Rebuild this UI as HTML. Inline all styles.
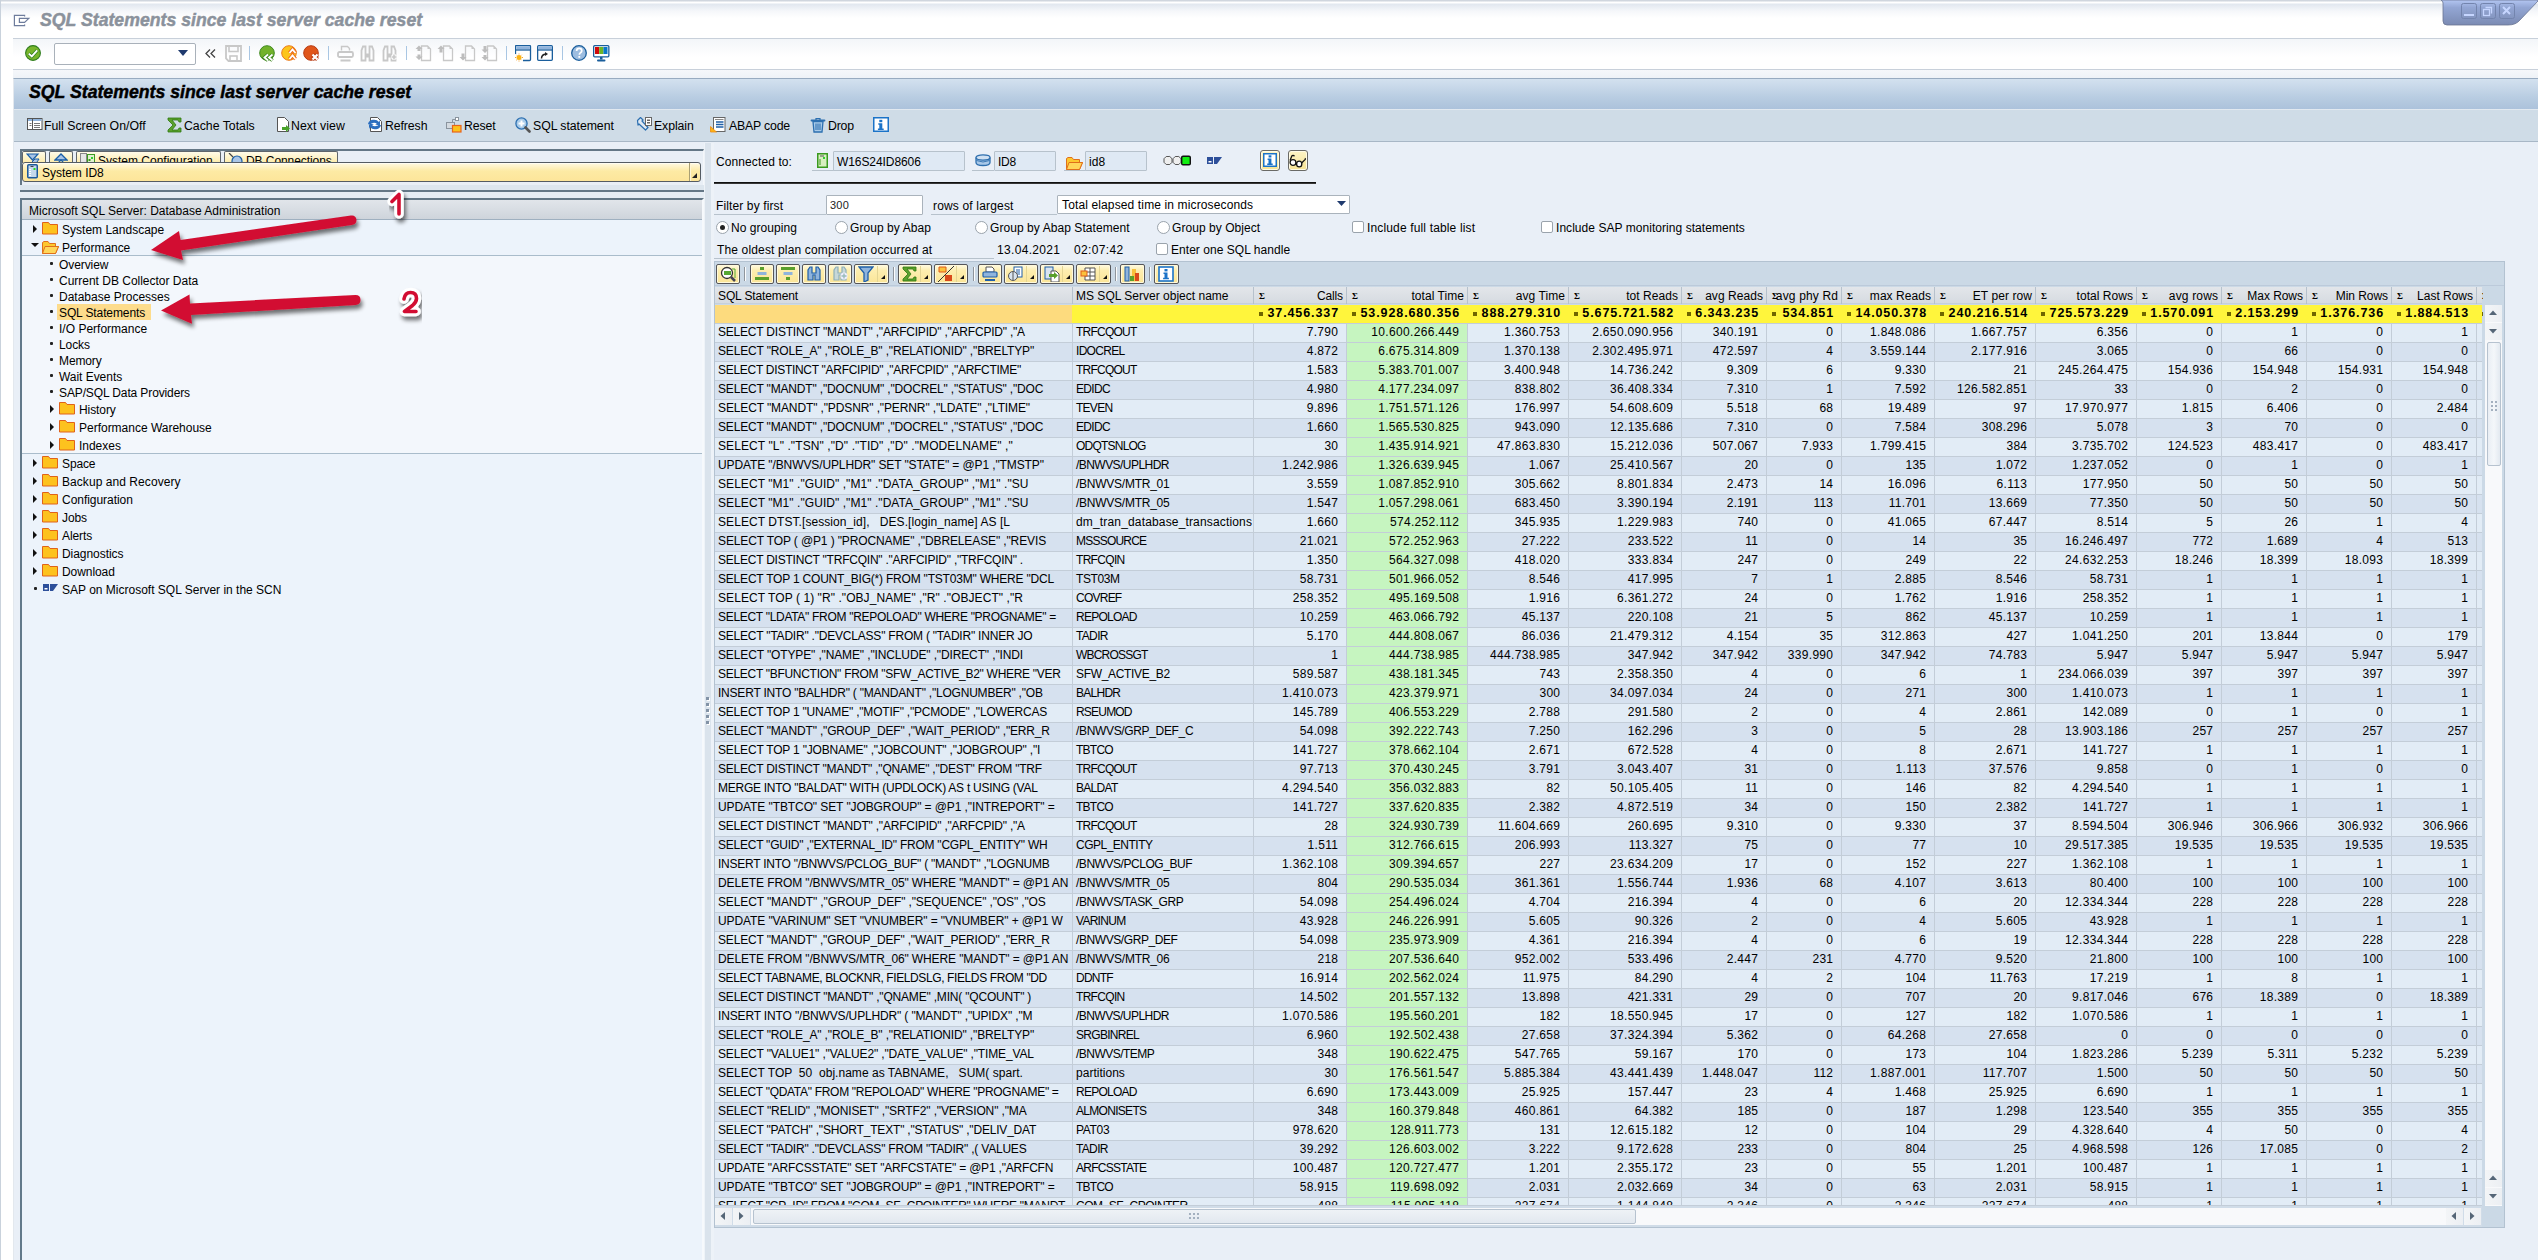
<!DOCTYPE html>
<html><head><meta charset="utf-8">
<style>
*{box-sizing:border-box}
html,body{margin:0;padding:0}
body{width:2538px;height:1260px;position:relative;overflow:hidden;background:#e9eff7;font-family:"Liberation Sans",sans-serif;font-size:12px;color:#000}
.a{position:absolute}
.t{position:absolute;white-space:pre;line-height:16px}
.row{position:absolute;left:715px;height:19px;width:1767px}
.c{position:absolute;top:0;height:18px;line-height:17px;white-space:pre;overflow:hidden;border-right:1px solid #c3cdd8}
.r{text-align:right;padding-right:8px}
.l{padding-left:3px}
.hd .c{border-right:1px solid #b6c1cc;line-height:18px;height:17px}
.tot .c{border-right:none;font-weight:bold;line-height:17px;font-size:12.5px;letter-spacing:0.9px}
.sq{display:inline-block;width:4px;height:4px;background:#6f6500;position:absolute;left:5px;top:7px}
.sig{position:absolute;left:5px;top:5px;font-size:9px;line-height:9px;font-weight:bold;font-family:"Liberation Serif",serif;letter-spacing:0}
</style></head><body>

<div class="a" style="left:0;top:0;width:2538px;height:38px;background:linear-gradient(#d0d6de 0,#d0d6de 1px,#fff 2px,#fff 3px,#e1e7ef 4px,#f5f7fa 11px,#fff 18px)"></div>
<div class="a" style="left:13px;top:38px;width:2525px;height:1px;background:#c8d0da"></div>
<svg class="a" style="left:13px;top:14px" width="18" height="14" viewBox="0 0 18 14"><path d="M11.6 2.6V1.4H1.4V11.6H11.6V10.4" fill="none" stroke="#6e7c9c" stroke-width="1.2"/><path d="M11.6 4.4H6.4V8.4H11.6L15.8 4.4H11.6" fill="none" stroke="#6e7c9c" stroke-width="1.2"/></svg>
<div class="t" style="left:40px;top:10px;font-size:17.7px;line-height:20px;font-weight:bold;font-style:italic;color:#8b929c;-webkit-text-stroke:0.45px #8b929c">SQL Statements since last server cache reset</div>
<svg class="a" style="left:2438px;top:0" width="100" height="30" viewBox="0 0 100 30">
<defs><linearGradient id="wg" x1="0" y1="0" x2="0" y2="1"><stop offset="0" stop-color="#b3c6f2"/><stop offset="0.3" stop-color="#93a6d4"/><stop offset="1" stop-color="#7b8bb3"/></linearGradient></defs>
<path d="M4 0 L100 0 L100 1 L82 20 Q78 25 70 25 L9 25 Q5 25 5 21 L5 3 Q5 1 3 0 Z" fill="url(#wg)" stroke="#6a7592" stroke-width="0.8"/>
<rect x="23.5" y="3.5" width="15" height="15" rx="2" fill="none" stroke="#7384ad"/>
<rect x="42.5" y="3.5" width="15" height="15" rx="2" fill="none" stroke="#7384ad"/>
<rect x="61.5" y="3.5" width="15" height="15" rx="2" fill="none" stroke="#7384ad"/>
<rect x="26" y="14" width="10" height="2" fill="#c6d6ff"/>
<rect x="45.5" y="9.5" width="6" height="6" fill="none" stroke="#c6d6ff" stroke-width="1.3"/>
<path d="M47.5 7.5h6v6" fill="none" stroke="#c6d6ff" stroke-width="1.3"/>
<path d="M65 7l7 7M72 7l-7 7" stroke="#c6d6ff" stroke-width="2"/>
</svg>
<div class="a" style="left:13px;top:39px;width:2525px;height:30px;background:linear-gradient(#f3f6f9,#fff 60%)"></div>
<div class="a" style="left:13px;top:69px;width:2525px;height:1px;background:#c8d0da"></div>
<div class="a" style="left:1px;top:38px;width:12px;height:32px;background:#fff"></div>
<svg class="a" style="left:25px;top:45px" width="17" height="17" viewBox="0 0 17 17"><circle cx="8" cy="8" r="7.4" fill="#78b52c" stroke="#2f7d1f" stroke-width="1.1"/><path d="M3.8 8.6l3 2.8 5.4-6" fill="none" stroke="#2f7d1f" stroke-width="3.4"/><path d="M3.8 8.6l3 2.8 5.4-6" fill="none" stroke="#fff" stroke-width="1.9"/></svg>
<div class="a" style="left:54px;top:43px;width:142px;height:22px;background:#fff;border:1px solid #a9b1ba;border-radius:2px"></div>
<svg class="a" style="left:178px;top:50px" width="10" height="6"><path d="M0 0h10l-5 6z" fill="#1f3a6e"/></svg>
<svg class="a" style="left:205px;top:49px" width="11" height="9"><path d="M5 0.5L1 4.5 5 8.5M10 0.5L6 4.5 10 8.5" fill="none" stroke="#444" stroke-width="1.3"/></svg>
<svg class="a" style="left:225px;top:45px" width="17" height="17" viewBox="0 0 17 17"><path d="M1 1h15v15H3.5L1 13.5z" fill="none" stroke="#c8c8c8" stroke-width="1.8"/><path d="M4 1.5v5h9v-5" fill="none" stroke="#c8c8c8" stroke-width="1.6"/><rect x="5" y="11" width="7" height="5" fill="none" stroke="#c8c8c8" stroke-width="1.6"/></svg>
<div class="a" style="left:249px;top:46px;width:1px;height:14px;background:#a9c6e3"></div>
<svg class="a" style="left:259px;top:45px" width="17" height="17" viewBox="0 0 17 17"><circle cx="8" cy="8" r="7.3" fill="#72b22b" stroke="#3f8a1f" stroke-width="1"/><path d="M9 9.5l-3.5 3 3.5 3M13.5 9.5l-3.5 3 3.5 3" fill="none" stroke="#3f8a1f" stroke-width="3.6" stroke-linejoin="miter"/><path d="M9 9.5l-3.5 3 3.5 3M13.5 9.5l-3.5 3 3.5 3" fill="none" stroke="#fff" stroke-width="1.8"/></svg>
<svg class="a" style="left:281px;top:45px" width="17" height="17" viewBox="0 0 17 17"><circle cx="8" cy="8" r="7.3" fill="#fcc51b" stroke="#ec7a1b" stroke-width="1"/><path d="M8.5 8l3-3.5 3 3.5M8.5 14l3-3.5 3 3.5" fill="none" stroke="#ec6a1b" stroke-width="3.6"/><path d="M8.5 8l3-3.5 3 3.5M8.5 14l3-3.5 3 3.5" fill="none" stroke="#fff" stroke-width="1.8"/></svg>
<svg class="a" style="left:303px;top:45px" width="17" height="17" viewBox="0 0 17 17"><circle cx="8" cy="8" r="7.3" fill="#e0561b" stroke="#b83a12" stroke-width="1"/><path d="M9.5 9.5l5 5M14.5 9.5l-5 5" stroke="#b83a12" stroke-width="4"/><path d="M9.5 9.5l5 5M14.5 9.5l-5 5" stroke="#fff" stroke-width="2.2"/></svg>
<div class="a" style="left:328px;top:46px;width:1px;height:14px;background:#a9c6e3"></div>
<svg class="a" style="left:337px;top:45px" width="17" height="17" viewBox="0 0 17 17"><path d="M4.5 5.5v-4h6l2 2v2" fill="none" stroke="#c8c8c8" stroke-width="1.4"/><rect x="1" y="7" width="15" height="5" rx="1.5" fill="none" stroke="#c8c8c8" stroke-width="1.8"/><rect x="3.5" y="14.5" width="10" height="2" fill="#c8c8c8"/></svg>
<svg class="a" style="left:360px;top:45px" width="17" height="17" viewBox="0 0 17 17"><path d="M1.5 15.5v-10l1.5-4h2.5v8h4v-8H12l1.5 4v10h-4v-4h-4v4z" fill="none" stroke="#c8c8c8" stroke-width="1.8"/></svg>
<svg class="a" style="left:382px;top:45px" width="17" height="17" viewBox="0 0 17 17"><path d="M1.5 15.5v-10l1.5-4h2.5v8h4v-8H12l1.5 4v10h-4v-4h-4v4z" fill="none" stroke="#c8c8c8" stroke-width="1.8"/><path d="M12 9v6M9 12h6" stroke="#fff" stroke-width="3"/><path d="M12 9.5v5M9.5 12h5" stroke="#c8c8c8" stroke-width="1.6"/></svg>
<div class="a" style="left:406px;top:46px;width:1px;height:14px;background:#a9c6e3"></div>
<svg class="a" style="left:415px;top:45px" width="17" height="17" viewBox="0 0 17 17"><path d="M6.5 1h6l3 3v11.5h-9z" fill="none" stroke="#c8c8c8" stroke-width="1.3"/><path d="M12.5 1v3h3" fill="#c8c8c8"/><path d="M4 0.5l-3.5 3.5h2v2h3v-2h2zM4 15l-3.5-3.5h2v-2h3v2h2z" fill="#bdbdbd"/></svg>
<svg class="a" style="left:437px;top:45px" width="17" height="17" viewBox="0 0 17 17"><path d="M6.5 1h6l3 3v11.5h-9z" fill="none" stroke="#c8c8c8" stroke-width="1.3"/><path d="M12.5 1v3h3" fill="#c8c8c8"/><path d="M4 0.5l-3.5 3.5h2v3.5h3v-3.5h2z" fill="#bdbdbd"/></svg>
<svg class="a" style="left:459px;top:45px" width="17" height="17" viewBox="0 0 17 17"><path d="M6.5 1h6l3 3v11.5h-9z" fill="none" stroke="#c8c8c8" stroke-width="1.3"/><path d="M12.5 1v3h3" fill="#c8c8c8"/><path d="M4 15.5l-3.5-3.5h2v-3.5h3v3.5h2z" fill="#bdbdbd"/></svg>
<svg class="a" style="left:481px;top:45px" width="17" height="17" viewBox="0 0 17 17"><path d="M6.5 1h6l3 3v11.5h-9z" fill="none" stroke="#c8c8c8" stroke-width="1.3"/><path d="M12.5 1v3h3" fill="#c8c8c8"/><path d="M4 8l-3.5-3.5h2v-3.5h3v3.5h2zM4 15.5l-3.5-3.5h2v-2h3v2h2z" fill="#bdbdbd"/></svg>
<div class="a" style="left:506px;top:46px;width:1px;height:14px;background:#a9c6e3"></div>
<svg class="a" style="left:515px;top:45px" width="17" height="17" viewBox="0 0 17 17"><path d="M8 15.5h6.5q1 0 1-1v-13q0-1-1-1h-13q-1 0-1 1V9" fill="#fff" stroke="#1a5e9c" stroke-width="1.3"/><rect x="1.3" y="1.3" width="13.6" height="3" fill="#8fb3dc"/><path d="M1 5h15" stroke="#1a5e9c" stroke-width="1.3"/><circle cx="4" cy="12.5" r="2.5" fill="#fcb414"/><path d="M4 8.5v1M4 15.5v1M0 12.5h1M7 12.5h1M1.3 9.8l.7.7M6 14.5l.7.7M1.3 15.2l.7-.7M6 10.5l.7-.7" stroke="#f69b14" stroke-width="0.9"/></svg>
<svg class="a" style="left:537px;top:45px" width="17" height="17" viewBox="0 0 17 17"><rect x="0.65" y="0.65" width="14.7" height="14.7" rx="1" fill="#fff" stroke="#1a5e9c" stroke-width="1.3"/><rect x="1.3" y="1.3" width="13.6" height="3" fill="#8fb3dc"/><path d="M1 5h15" stroke="#1a5e9c" stroke-width="1.3"/><path d="M4.5 13.5q0-4 4.5-4.5" fill="none" stroke="#222" stroke-width="1.5"/><path d="M8 7l3 2-3 2z" fill="#222"/></svg>
<div class="a" style="left:562px;top:46px;width:1px;height:14px;background:#a9c6e3"></div>
<svg class="a" style="left:571px;top:45px" width="17" height="17" viewBox="0 0 17 17"><circle cx="8" cy="8" r="7.3" fill="#9dbde0" stroke="#1a5e9c" stroke-width="1.3"/><path d="M5.6 6q0-2.6 2.6-2.6 2.6 0 2.6 2.4 0 1.5-1.6 2.3-.8.4-.8 1.6" fill="none" stroke="#fff" stroke-width="1.7"/><rect x="7.4" y="11" width="1.8" height="1.8" fill="#fff"/></svg>
<svg class="a" style="left:593px;top:45px" width="17" height="17" viewBox="0 0 17 17"><rect x="0.65" y="0.65" width="15.2" height="11.2" rx="1" fill="#fff" stroke="#1a5e9c" stroke-width="1.3"/><rect x="2" y="2" width="4.2" height="7" fill="#d10a0a"/><rect x="6.2" y="2" width="4.2" height="7" fill="#6db526"/><rect x="10.4" y="2" width="4.1" height="7" fill="#0a78c8"/><rect x="7" y="12" width="2.5" height="2.5" fill="#1a5e9c"/><rect x="4" y="14.5" width="8.5" height="2" rx="1" fill="#1a5e9c"/></svg>
<div class="a" style="left:0;top:0px;width:1px;height:1260px;background:#c9d2dc"></div>
<div class="a" style="left:1px;top:70px;width:12px;height:1190px;background:#fff"></div>
<div class="a" style="left:13px;top:70px;width:2525px;height:8px;background:linear-gradient(#f5f7fa,#eef2f7)"></div>
<div class="a" style="left:13px;top:78px;width:2525px;height:1182px;background:#e9eff7;border-left:1px solid #e3e8ee;border-top:1px solid #98abc0"></div>
<div class="a" style="left:14px;top:79px;width:2524px;height:30px;background:linear-gradient(#d3e1ef,#b9cde2 60%,#acc2db)"></div>
<div class="t" style="left:29px;top:82px;font-size:17.7px;line-height:20px;font-weight:bold;font-style:italic;color:#000;-webkit-text-stroke:0.45px #000">SQL Statements since last server cache reset</div>
<div class="a" style="left:14px;top:109px;width:2524px;height:33px;background:#cfdce7;border-top:1px solid #e2e9f0;border-bottom:1px solid #a8b7c6"></div>
<svg class="a" style="left:27px;top:117px" width="16" height="16" viewBox="0 0 16 16"><rect x="0.5" y="1.5" width="14.5" height="11" fill="#fff" stroke="#555"/><rect x="1" y="2" width="13.5" height="2" fill="#8fb3dc"/><path d="M5.5 2v10" stroke="#555"/><path d="M2.5 6.5h2M2.5 8.5h2" stroke="#777"/><path d="M7 6.5h6M7 8.5h6M7 10.5h6" stroke="#777"/></svg>
<div class="t" style="left:44px;top:118px;font-size:12.3px;letter-spacing:0.00px">Full Screen On/Off</div>
<svg class="a" style="left:167px;top:117px" width="16" height="16" viewBox="0 0 16 16"><path d="M1 1h13v4h-2l-1-2H5l4 5-4 5h6l1-2h2v4H1v-2l5-5-5-5z" fill="#5aa02c" stroke="#2f7a12" stroke-width="0.8"/></svg>
<div class="t" style="left:184px;top:118px;font-size:12.3px;letter-spacing:-0.01px">Cache Totals</div>
<svg class="a" style="left:276px;top:117px" width="16" height="16" viewBox="0 0 16 16"><path d="M1.5 0.5h7l4 4v10h-11z" fill="#fff" stroke="#555"/><path d="M6 10h4v-2l4 3.5-4 3.5v-2H6z" fill="#49a32a"/></svg>
<div class="t" style="left:291px;top:118px;font-size:12.3px;letter-spacing:0.06px">Next view</div>
<svg class="a" style="left:367px;top:117px" width="16" height="16" viewBox="0 0 16 16"><path d="M3.5 0.5h7l4 4v10h-11z" fill="#fff" stroke="#555"/><path d="M1 7a6 5 0 0 1 11-2l1-2v5h-5l2-1a4 3 0 0 0-7 1z M14 8a6 5 0 0 1-11 2l-1 2V7h5l-2 1a4 3 0 0 0 7-1z" fill="#2c6fc0"/></svg>
<div class="t" style="left:385px;top:118px;font-size:12.3px;letter-spacing:-0.09px">Refresh</div>
<svg class="a" style="left:446px;top:117px" width="16" height="16" viewBox="0 0 16 16"><rect x="0.5" y="5.5" width="8" height="6" fill="#d4dae0" stroke="#8a949e"/><path d="M6.5 5.5v-3h3" fill="none" stroke="#8a949e"/><rect x="9.5" y="0.5" width="3" height="3" fill="#fff" stroke="#8a949e"/><rect x="6.5" y="8.5" width="8.5" height="6.5" fill="#fcc21b" stroke="#e8641b" stroke-width="1.2"/></svg>
<div class="t" style="left:464px;top:118px;font-size:12.3px;letter-spacing:-0.14px">Reset</div>
<svg class="a" style="left:515px;top:117px" width="16" height="16" viewBox="0 0 16 16"><circle cx="6.5" cy="6.5" r="5.6" fill="#a9cbe9" stroke="#2c6fb0" stroke-width="1.3"/><path d="M6.5 3.5v6M3.5 6.5h6" stroke="#fff" stroke-width="2"/><path d="M10.5 10.5l4 4" stroke="#555" stroke-width="2.6" stroke-linecap="round"/></svg>
<div class="t" style="left:533px;top:118px;font-size:12.3px;letter-spacing:-0.06px">SQL statement</div>
<svg class="a" style="left:636px;top:117px" width="16" height="16" viewBox="0 0 16 16"><path d="M1.5 3.5l3-3 2.5 2.5-1 1 6 6.5-2.5 2.5-6.5-6-1 1z" fill="#dfe9f3" stroke="#2c6fb0" stroke-width="1.2" stroke-linejoin="round"/><rect x="9.5" y="0.5" width="6" height="8" fill="#fff" stroke="#666"/><rect x="11" y="2.5" width="3" height="1.5" fill="#666"/><rect x="11" y="5" width="3" height="1.5" fill="#666"/></svg>
<div class="t" style="left:654px;top:118px;font-size:12.3px;letter-spacing:-0.08px">Explain</div>
<svg class="a" style="left:710px;top:117px" width="16" height="16" viewBox="0 0 16 16"><rect x="3.5" y="0.5" width="11.5" height="14" fill="#fff" stroke="#666"/><path d="M5 2.5h8.5" stroke="#888"/><path d="M6 5h7.5M6 7.5h7.5M6 10h7.5" stroke="#1f5fa8" stroke-width="1.3"/><path d="M0.5 15V9.5l6 5.5z" fill="#fcb414" stroke="#f08a14" stroke-width="0.8"/></svg>
<div class="t" style="left:729px;top:118px;font-size:12.3px;letter-spacing:-0.19px">ABAP code</div>
<svg class="a" style="left:810px;top:117px" width="16" height="16" viewBox="0 0 16 16"><path d="M1.5 3.5h13" stroke="#2c6fb0" stroke-width="1.8" stroke-linecap="round"/><path d="M6 3V1.5h4V3" fill="none" stroke="#2c6fb0" stroke-width="1.2"/><path d="M3 4.5h10l-1 10.5H4z" fill="#a9cbe9" stroke="#2c6fb0" stroke-width="1.3"/><path d="M6 6.5v6.5M8 6.5v6.5M10 6.5v6.5" stroke="#2c6fb0" stroke-width="1.1"/></svg>
<div class="t" style="left:828px;top:118px;font-size:12.3px;letter-spacing:-0.18px">Drop</div>
<svg class="a" style="left:873px;top:117px" width="16" height="15"><rect x="0.75" y="0.75" width="14.5" height="13.5" fill="#fff" stroke="#1b73c8" stroke-width="1.5"/><rect x="6.3" y="2.8" width="3" height="2.4" fill="#1b73c8"/><path d="M5.3 6.2h4v5.3h1.4v1.6H4.9v-1.6h1.4V7.8h-1z" fill="#1b73c8"/></svg>
<div class="a" style="left:20px;top:149px;width:684px;height:36px;background:#e9eff6;border-left:2px solid #647786;border-top:2px solid #647786;border-right:1px solid #f4f7fa"></div>
<div class="a" style="left:20px;top:185px;width:684px;height:5px;background:#dde6ee"></div>
<div class="a" style="left:22px;top:151px;width:24px;height:12px;overflow:hidden;background:linear-gradient(#fffbe9,#fdeba8);border:1px solid #5f656b;border-bottom:none;border-radius:2px 2px 0 0">
</div>
<div class="a" style="left:49px;top:151px;width:24px;height:12px;overflow:hidden;background:linear-gradient(#fffbe9,#fdeba8);border:1px solid #5f656b;border-bottom:none;border-radius:2px 2px 0 0">
</div>
<div class="a" style="left:76px;top:151px;width:145px;height:12px;overflow:hidden;background:linear-gradient(#fffbe9,#fdeba8);border:1px solid #5f656b;border-bottom:none;border-radius:2px 2px 0 0">
<div class="t" style="left:21px;top:1px;letter-spacing:0.00px">System Configuration</div>
</div>
<div class="a" style="left:224px;top:151px;width:114px;height:12px;overflow:hidden;background:linear-gradient(#fffbe9,#fdeba8);border:1px solid #5f656b;border-bottom:none;border-radius:2px 2px 0 0">
<div class="t" style="left:21px;top:1px;letter-spacing:-0.07px">DB Connections</div>
</div>
<svg class="a" style="left:26px;top:153px" width="14" height="9"><path d="M1 1h11l-5.5 6z" fill="#a9c5e6" stroke="#1a5ea8" stroke-width="1.2"/><path d="M6 9l3-3h4l-2 3" fill="#a9c5e6" stroke="#1a5ea8" stroke-width="1"/></svg>
<svg class="a" style="left:54px;top:153px" width="14" height="9"><path d="M1 7l6-6 6 6z" fill="#a9c5e6" stroke="#1a5ea8" stroke-width="1.3"/><path d="M4 10l3-3 3 3" fill="none" stroke="#1a5ea8" stroke-width="1.2"/></svg>
<svg class="a" style="left:80px;top:153px" width="16" height="9"><rect x="0.5" y="0.5" width="6" height="11" fill="#e6e6e6" stroke="#888"/><rect x="7.5" y="1.5" width="7" height="10" fill="#dff0cf" stroke="#3c9a20"/><rect x="11" y="4" width="2" height="2" fill="#2fd12f"/><rect x="8.5" y="6" width="2" height="2" fill="#3c9a20"/></svg>
<svg class="a" style="left:228px;top:153px" width="16" height="9"><path d="M1 0l4 4" stroke="#444" stroke-width="1.2"/><circle cx="9" cy="8" r="5" fill="#a9c5e6" stroke="#1a5ea8" stroke-width="1.2"/></svg>
<div class="a" style="left:22px;top:162px;width:679px;height:20px;background:linear-gradient(#fffae4,#fdeaa4 45%,#fde59a);border:1px solid #555c63;border-radius:3px;box-shadow:inset 0 1px 0 #fffdf2"></div>
<svg class="a" style="left:27px;top:164px" width="11" height="15"><rect x="0.75" y="0.75" width="9.5" height="13" rx="1" fill="#c5d9ec" stroke="#1c5a9c" stroke-width="1.5"/><path d="M3.5 2.5h3" stroke="#444"/><rect x="6.5" y="4" width="2" height="2" fill="#22dd22"/><path d="M2 5.5h2M2 7.5h2M2 9.5h2M2 11.5h2" stroke="#fff" stroke-width="1.1"/></svg>
<div class="t" style="left:42px;top:165px;letter-spacing:-0.03px">System ID8</div>
<div class="a" style="left:689px;top:163px;width:1px;height:18px;background:#a99f73;box-shadow:1px 0 0 #fff6d6"></div>
<svg class="a" style="left:692px;top:173px" width="6" height="6"><path d="M5 0v5H0z" fill="#222"/></svg>
<div class="a" style="left:20px;top:190px;width:684px;height:2px;background:#647786"></div>
<div class="a" style="left:20px;top:192px;width:684px;height:6px;background:#e6edf4"></div>
<div class="a tree" style="left:20px;top:198px;width:684px;height:1062px;background:#ecf3fb;border-left:2px solid #62798a;border-top:2px solid #637786;border-right:2px solid #f6f9fc"></div>
<div class="a" style="left:22px;top:200px;width:680px;height:20px;background:linear-gradient(#e1e5ea,#d8dde3 50%,#ced4db);border-bottom:1px solid #9fb0c0"></div>
<div class="t" style="left:29px;top:203px;letter-spacing:0.01px">Microsoft SQL Server: Database Administration</div>
<div class="a" style="left:22px;top:255px;width:680px;height:199px;background:#f3f7fc;border-top:1px solid #a9bccb;border-bottom:1px solid #a9bccb"></div>
<svg class="a" style="left:33px;top:225px" width="5" height="8"><path d="M0 0l4 4-4 4z" fill="#111"/></svg>
<svg class="a" style="left:42px;top:222px" width="17" height="14"><path d="M0.5 0.5h6l1.5 2h7.5v9.5H0.5z" fill="#fdc21e" stroke="#e0621b"/></svg>
<div class="t" style="left:62px;top:222px;letter-spacing:0.01px">System Landscape</div>
<svg class="a" style="left:31px;top:243px" width="8" height="5"><path d="M0 0h8l-4 4z" fill="#111"/></svg>
<svg class="a" style="left:42px;top:240px" width="17" height="14"><path d="M0.5 2.5v11h13l3-7h-3v-3h-6l-1.5-2h-4z" fill="#fdc82f" stroke="#e0701b"/><path d="M3 6.5h13.5l-3 7H0.5z" fill="#ffd75a" stroke="#e0701b"/></svg>
<div class="t" style="left:62px;top:240px;letter-spacing:-0.04px">Performance</div>
<div class="a" style="left:50px;top:262px;width:3px;height:3px;background:#222;border-radius:1px"></div>
<div class="t" style="left:59px;top:257px;letter-spacing:-0.08px">Overview</div>
<div class="a" style="left:50px;top:278px;width:3px;height:3px;background:#222;border-radius:1px"></div>
<div class="t" style="left:59px;top:273px;letter-spacing:-0.01px">Current DB Collector Data</div>
<div class="a" style="left:50px;top:294px;width:3px;height:3px;background:#222;border-radius:1px"></div>
<div class="t" style="left:59px;top:289px;letter-spacing:0.00px">Database Processes</div>
<div class="a" style="left:50px;top:310px;width:3px;height:3px;background:#222;border-radius:1px"></div>
<div class="a" style="left:57px;top:304px;width:94px;height:16px;background:#fddc8c"></div>
<div class="t" style="left:59px;top:305px;letter-spacing:-0.11px">SQL Statements</div>
<div class="a" style="left:50px;top:326px;width:3px;height:3px;background:#222;border-radius:1px"></div>
<div class="t" style="left:59px;top:321px;letter-spacing:0.01px">I/O Performance</div>
<div class="a" style="left:50px;top:342px;width:3px;height:3px;background:#222;border-radius:1px"></div>
<div class="t" style="left:59px;top:337px;letter-spacing:-0.10px">Locks</div>
<div class="a" style="left:50px;top:358px;width:3px;height:3px;background:#222;border-radius:1px"></div>
<div class="t" style="left:59px;top:353px;letter-spacing:-0.12px">Memory</div>
<div class="a" style="left:50px;top:374px;width:3px;height:3px;background:#222;border-radius:1px"></div>
<div class="t" style="left:59px;top:369px;letter-spacing:-0.04px">Wait Events</div>
<div class="a" style="left:50px;top:390px;width:3px;height:3px;background:#222;border-radius:1px"></div>
<div class="t" style="left:59px;top:385px;letter-spacing:-0.12px">SAP/SQL Data Providers</div>
<svg class="a" style="left:50px;top:405px" width="5" height="8"><path d="M0 0l4 4-4 4z" fill="#111"/></svg>
<svg class="a" style="left:59px;top:402px" width="17" height="14"><path d="M0.5 0.5h6l1.5 2h7.5v9.5H0.5z" fill="#fdc21e" stroke="#e0621b"/></svg>
<div class="t" style="left:79px;top:402px;letter-spacing:-0.09px">History</div>
<svg class="a" style="left:50px;top:423px" width="5" height="8"><path d="M0 0l4 4-4 4z" fill="#111"/></svg>
<svg class="a" style="left:59px;top:420px" width="17" height="14"><path d="M0.5 0.5h6l1.5 2h7.5v9.5H0.5z" fill="#fdc21e" stroke="#e0621b"/></svg>
<div class="t" style="left:79px;top:420px;letter-spacing:-0.01px">Performance Warehouse</div>
<svg class="a" style="left:50px;top:441px" width="5" height="8"><path d="M0 0l4 4-4 4z" fill="#111"/></svg>
<svg class="a" style="left:59px;top:438px" width="17" height="14"><path d="M0.5 0.5h6l1.5 2h7.5v9.5H0.5z" fill="#fdc21e" stroke="#e0621b"/></svg>
<div class="t" style="left:79px;top:438px;letter-spacing:-0.02px">Indexes</div>
<svg class="a" style="left:33px;top:459px" width="5" height="8"><path d="M0 0l4 4-4 4z" fill="#111"/></svg>
<svg class="a" style="left:42px;top:456px" width="17" height="14"><path d="M0.5 0.5h6l1.5 2h7.5v9.5H0.5z" fill="#fdc21e" stroke="#e0621b"/></svg>
<div class="t" style="left:62px;top:456px;letter-spacing:-0.12px">Space</div>
<svg class="a" style="left:33px;top:477px" width="5" height="8"><path d="M0 0l4 4-4 4z" fill="#111"/></svg>
<svg class="a" style="left:42px;top:474px" width="17" height="14"><path d="M0.5 0.5h6l1.5 2h7.5v9.5H0.5z" fill="#fdc21e" stroke="#e0621b"/></svg>
<div class="t" style="left:62px;top:474px;letter-spacing:0.06px">Backup and Recovery</div>
<svg class="a" style="left:33px;top:495px" width="5" height="8"><path d="M0 0l4 4-4 4z" fill="#111"/></svg>
<svg class="a" style="left:42px;top:492px" width="17" height="14"><path d="M0.5 0.5h6l1.5 2h7.5v9.5H0.5z" fill="#fdc21e" stroke="#e0621b"/></svg>
<div class="t" style="left:62px;top:492px;letter-spacing:-0.04px">Configuration</div>
<svg class="a" style="left:33px;top:513px" width="5" height="8"><path d="M0 0l4 4-4 4z" fill="#111"/></svg>
<svg class="a" style="left:42px;top:510px" width="17" height="14"><path d="M0.5 0.5h6l1.5 2h7.5v9.5H0.5z" fill="#fdc21e" stroke="#e0621b"/></svg>
<div class="t" style="left:62px;top:510px;letter-spacing:-0.11px">Jobs</div>
<svg class="a" style="left:33px;top:531px" width="5" height="8"><path d="M0 0l4 4-4 4z" fill="#111"/></svg>
<svg class="a" style="left:42px;top:528px" width="17" height="14"><path d="M0.5 0.5h6l1.5 2h7.5v9.5H0.5z" fill="#fdc21e" stroke="#e0621b"/></svg>
<div class="t" style="left:62px;top:528px;letter-spacing:-0.10px">Alerts</div>
<svg class="a" style="left:33px;top:549px" width="5" height="8"><path d="M0 0l4 4-4 4z" fill="#111"/></svg>
<svg class="a" style="left:42px;top:546px" width="17" height="14"><path d="M0.5 0.5h6l1.5 2h7.5v9.5H0.5z" fill="#fdc21e" stroke="#e0621b"/></svg>
<div class="t" style="left:62px;top:546px;letter-spacing:-0.05px">Diagnostics</div>
<svg class="a" style="left:33px;top:567px" width="5" height="8"><path d="M0 0l4 4-4 4z" fill="#111"/></svg>
<svg class="a" style="left:42px;top:564px" width="17" height="14"><path d="M0.5 0.5h6l1.5 2h7.5v9.5H0.5z" fill="#fdc21e" stroke="#e0621b"/></svg>
<div class="t" style="left:62px;top:564px;letter-spacing:-0.07px">Download</div>
<div class="a" style="left:34px;top:587px;width:3px;height:3px;background:#222;border-radius:1px"></div>
<svg class="a" style="left:42px;top:583px" width="16" height="9"><rect x="1" y="1" width="6" height="7" fill="#2d4f9a"/><rect x="2.5" y="5" width="3" height="1.5" fill="#fff"/><path d="M8 1h8l-5 7H8z" fill="#2d4f9a"/></svg>
<div class="t" style="left:62px;top:582px;letter-spacing:-0.00px">SAP on Microsoft SQL Server in the SCN</div>
<div class="a" style="left:704px;top:143px;width:1px;height:1117px;background:#eef3f8"></div>
<div class="a" style="left:705px;top:143px;width:6px;height:1117px;background:#dae3ec"></div>
<div class="a" style="left:711px;top:143px;width:3px;height:1117px;background:#edf2f8"></div>
<div class="a" style="left:706px;top:697px;width:3px;height:3px;background:#8393a6;box-shadow:1px 1px 0 #fff"></div>
<div class="a" style="left:706px;top:703px;width:3px;height:3px;background:#8393a6;box-shadow:1px 1px 0 #fff"></div>
<div class="a" style="left:706px;top:709px;width:3px;height:3px;background:#8393a6;box-shadow:1px 1px 0 #fff"></div>
<div class="a" style="left:706px;top:715px;width:3px;height:3px;background:#8393a6;box-shadow:1px 1px 0 #fff"></div>
<div class="a" style="left:706px;top:721px;width:3px;height:3px;background:#8393a6;box-shadow:1px 1px 0 #fff"></div>
<div class="t" style="left:716px;top:154px;letter-spacing:0.10px">Connected to:</div>
<div class="a" style="left:812px;top:170px;width:22px;height:1px;background:#b7c2cc"></div>
<svg class="a" style="left:817px;top:153px" width="11" height="15"><rect x="0.75" y="0.75" width="9.5" height="13.5" fill="#d8efc0" stroke="#3a9a1f" stroke-width="1.5"/><path d="M3 3h4" stroke="#555"/><rect x="6" y="4" width="2" height="2" fill="#2fd12f"/><path d="M2 7h2M2 9h2M2 11h2" stroke="#3a9a1f"/></svg>
<div class="a" style="left:833px;top:151px;width:132px;height:20px;background:#dfe9f4;border:1px solid #b7c2cc;border-radius:1px"></div>
<div class="t" style="left:837px;top:154px;font-size:12px;letter-spacing:-0.08px">W16S24ID8606</div>
<div class="a" style="left:972px;top:170px;width:22px;height:1px;background:#b7c2cc"></div>
<svg class="a" style="left:975px;top:154px" width="16" height="13" viewBox="0 0 16 13"><path d="M1 3.5v5q0 3 7 3t7-3v-5" fill="#a9c8e8" stroke="#2f6fae" stroke-width="1.3"/><ellipse cx="8" cy="3.5" rx="7" ry="2.6" fill="#cfe0f2" stroke="#2f6fae" stroke-width="1.3"/><path d="M1.5 6.5q6.5 3 13 0" fill="none" stroke="#2f6fae" stroke-width="0.9"/></svg>
<div class="a" style="left:994px;top:151px;width:62px;height:20px;background:#dfe9f4;border:1px solid #b7c2cc;border-radius:1px"></div>
<div class="t" style="left:998px;top:154px;font-size:12px;letter-spacing:-0.28px">ID8</div>
<div class="a" style="left:1064px;top:170px;width:22px;height:1px;background:#b7c2cc"></div>
<svg class="a" style="left:1066px;top:156px" width="17" height="14"><path d="M0.5 2.5v11h13l3-7h-3v-3h-6l-1.5-2h-4z" fill="#fdc82f" stroke="#e0701b"/><path d="M3 6.5h13.5l-3 7H0.5z" fill="#ffd75a" stroke="#e0701b"/></svg>
<div class="a" style="left:1085px;top:151px;width:62px;height:20px;background:#dfe9f4;border:1px solid #b7c2cc;border-radius:1px"></div>
<div class="t" style="left:1089px;top:154px;font-size:12px;letter-spacing:0.10px">id8</div>
<svg class="a" style="left:1163px;top:155px" width="30" height="12" viewBox="0 0 30 12"><path d="M3.2 1.5h3.6l2.2 2.2v3.6L6.8 9.5H3.2L1 7.3V3.7z" fill="#eee" stroke="#555" stroke-width="1"/><path d="M12.2 1.5h3.6l2.2 2.2v3.6l-2.2 2.2h-3.6L10 7.3V3.7z" fill="#eee" stroke="#555" stroke-width="1"/><rect x="18.7" y="1.2" width="8.6" height="8.6" rx="1.3" fill="#11ee11" stroke="#111" stroke-width="1.4"/></svg>
<svg class="a" style="left:1206px;top:156px" width="16" height="9"><rect x="1" y="1" width="6" height="7" fill="#2d4f9a"/><rect x="2.5" y="5" width="3" height="1.5" fill="#fff"/><path d="M8 1h8l-5 7H8z" fill="#2d4f9a"/></svg>
<div class="a" style="left:1260px;top:150px;width:20px;height:21px;background:linear-gradient(#fdf4c6,#f6e394);border:1px solid #6a6a66;border-radius:3px;box-shadow:inset 0 0 0 1px #fffbe6"></div>
<svg class="a" style="left:1263px;top:153px" width="14" height="14"><rect x="0.75" y="0.75" width="12.5" height="12.5" fill="#fff" stroke="#1b73c8" stroke-width="1.5"/><rect x="5.6" y="2.3" width="2.8" height="2.2" fill="#1b73c8"/><path d="M4.6 5.4h3.8v5h1.3v1.5H4.2v-1.5h1.3V6.9h-.9z" fill="#1b73c8"/></svg>
<div class="a" style="left:1288px;top:150px;width:20px;height:21px;background:linear-gradient(#fdf4c6,#f6e394);border:1px solid #6a6a66;border-radius:3px;box-shadow:inset 0 0 0 1px #fffbe6"></div>
<svg class="a" style="left:1289px;top:154px" width="18" height="14" viewBox="0 0 18 14"><path d="M5.5 2.2Q4 0.5 2.8 2L1 6.5" fill="none" stroke="#111" stroke-width="1.3"/><ellipse cx="4" cy="8.5" rx="2.9" ry="2.9" fill="#fff" stroke="#111" stroke-width="1.3"/><ellipse cx="10.2" cy="10" rx="2.6" ry="2.9" fill="#fff" stroke="#111" stroke-width="1.3"/><path d="M6.6 8.7L7.6 9.3M12.6 9L16 5.6Q16.8 4.6 15.8 4.3" fill="none" stroke="#111" stroke-width="1.3"/></svg>
<div class="a" style="left:714px;top:182px;width:602px;height:2px;background:linear-gradient(#111 60%,#777)"></div>
<div class="t" style="left:716px;top:198px;letter-spacing:0.12px">Filter by first</div>
<div class="a" style="left:714px;top:214px;width:112px;height:1px;background:#b7c2cc"></div>
<div class="a" style="left:826px;top:195px;width:97px;height:20px;background:#fff;border:1px solid #aab3bc;border-radius:1px"></div>
<div class="t" style="left:830px;top:197px;font-size:11px;color:#222;letter-spacing:0.22px">300</div>
<div class="t" style="left:933px;top:198px;letter-spacing:0.17px">rows of largest</div>
<div class="a" style="left:931px;top:214px;width:126px;height:1px;background:#b7c2cc"></div>
<div class="a" style="left:1057px;top:195px;width:293px;height:19px;background:#fff;border:1px solid #aab3bc;border-radius:1px"></div>
<div class="t" style="left:1062px;top:197px;letter-spacing:0.13px">Total elapsed time in microseconds</div>
<svg class="a" style="left:1337px;top:201px" width="10" height="6"><path d="M0 0h9l-4.5 5z" fill="#1f3a6e"/></svg>
<div class="a" style="left:716px;top:221px;width:13px;height:13px;border-radius:50%;background:#fff;border:1px solid #9aa3ac"></div><div class="a" style="left:720px;top:225px;width:5px;height:5px;border-radius:50%;background:#222"></div>
<div class="t" style="left:731px;top:220px;letter-spacing:0.05px">No grouping</div>
<div class="a" style="left:835px;top:221px;width:13px;height:13px;border-radius:50%;background:#fff;border:1px solid #9aa3ac"></div>
<div class="t" style="left:850px;top:220px;letter-spacing:0.07px">Group by Abap</div>
<div class="a" style="left:975px;top:221px;width:13px;height:13px;border-radius:50%;background:#fff;border:1px solid #9aa3ac"></div>
<div class="t" style="left:990px;top:220px;letter-spacing:0.07px">Group by Abap Statement</div>
<div class="a" style="left:1157px;top:221px;width:13px;height:13px;border-radius:50%;background:#fff;border:1px solid #9aa3ac"></div>
<div class="t" style="left:1172px;top:220px;letter-spacing:0.05px">Group by Object</div>
<div class="a" style="left:1352px;top:221px;width:12px;height:12px;background:#fff;border:1px solid #9aa3ac;border-radius:2px"></div>
<div class="t" style="left:1367px;top:220px;letter-spacing:0.15px">Include full table list</div>
<div class="a" style="left:1541px;top:221px;width:12px;height:12px;background:#fff;border:1px solid #9aa3ac;border-radius:2px"></div>
<div class="t" style="left:1556px;top:220px;letter-spacing:0.05px">Include SAP monitoring statements</div>
<div class="t" style="left:717px;top:242px;letter-spacing:0.15px">The oldest plan compilation occurred at</div>
<div class="a" style="left:714px;top:258px;width:280px;height:1px;background:#b7c2cc"></div>
<div class="t" style="left:997px;top:242px;letter-spacing:0.32px">13.04.2021</div>
<div class="t" style="left:1074px;top:242px;letter-spacing:0.34px">02:07:42</div>
<div class="a" style="left:1156px;top:243px;width:12px;height:12px;background:#fff;border:1px solid #9aa3ac;border-radius:2px"></div>
<div class="t" style="left:1171px;top:242px;letter-spacing:0.04px">Enter one SQL handle</div>
<div class="a" style="left:714px;top:261px;width:1791px;height:967px;background:#cbd9e6;border:1px solid #b3c2d1"></div>
<div class="a" style="left:715px;top:285px;width:1789px;height:1px;background:#bccada"></div>
<div class="a" style="left:716px;top:264px;width:24px;height:20px;background:linear-gradient(#fffbe3,#fdeeb0 30%,#fbe597);border:1px solid #56565a;border-radius:2px;box-shadow:inset 0 0 0 1px #fff9dc"></div>
<svg class="a" style="left:720px;top:266px" width="16" height="16" viewBox="0 0 16 16"><circle cx="7" cy="7" r="5.5" fill="#fff" stroke="#333" stroke-width="1.3"/><rect x="4" y="5" width="7" height="4" fill="#55a832"/><path d="M11 11l4 4" stroke="#445" stroke-width="2.5"/><path d="M12 3h3v9" fill="none" stroke="#55a832"/></svg>
<div class="a" style="left:750px;top:264px;width:24px;height:20px;background:linear-gradient(#fffbe3,#fdeeb0 30%,#fbe597);border:1px solid #56565a;border-radius:2px;box-shadow:inset 0 0 0 1px #fff9dc"></div>
<svg class="a" style="left:754px;top:266px" width="16" height="16" viewBox="0 0 16 16"><rect x="6" y="1" width="4" height="3" fill="#5aa02c"/><rect x="3.5" y="6" width="9" height="3" fill="#8fb4dc"/><rect x="1" y="11" width="14" height="3" fill="#5aa02c"/></svg>
<div class="a" style="left:776px;top:264px;width:24px;height:20px;background:linear-gradient(#fffbe3,#fdeeb0 30%,#fbe597);border:1px solid #56565a;border-radius:2px;box-shadow:inset 0 0 0 1px #fff9dc"></div>
<svg class="a" style="left:780px;top:266px" width="16" height="16" viewBox="0 0 16 16"><rect x="1" y="1" width="14" height="3" fill="#5aa02c"/><rect x="3.5" y="6" width="9" height="3" fill="#8fb4dc"/><rect x="6" y="11" width="4" height="3" fill="#5aa02c"/></svg>
<div class="a" style="left:802px;top:264px;width:24px;height:20px;background:linear-gradient(#fffbe3,#fdeeb0 30%,#fbe597);border:1px solid #56565a;border-radius:2px;box-shadow:inset 0 0 0 1px #fff9dc"></div>
<svg class="a" style="left:806px;top:266px" width="16" height="16" viewBox="0 0 16 16"><path d="M2 14V4l2-3h2v6h4V1h2l2 3v10h-5V9H7v5z" fill="#8fb4dc" stroke="#1f5fa8" stroke-width="1.2"/></svg>
<div class="a" style="left:828px;top:264px;width:24px;height:20px;background:linear-gradient(#fffbe3,#fdeeb0 30%,#fbe597);border:1px solid #56565a;border-radius:2px;box-shadow:inset 0 0 0 1px #fff9dc"></div>
<svg class="a" style="left:832px;top:266px" width="16" height="16" viewBox="0 0 16 16"><path d="M2 14V4l2-3h2v6h4V1h2l2 3v10h-5V9H7v5z" fill="#c7d8d8" stroke="#8fb0b8" stroke-width="1.2"/><circle cx="12" cy="10" r="3.5" fill="#eef"/><path d="M12 7.5v5M9.5 10h5" stroke="#9bb" stroke-width="1.4"/></svg>
<div class="a" style="left:854px;top:264px;width:35px;height:20px;background:linear-gradient(#fffbe3,#fdeeb0 30%,#fbe597);border:1px solid #56565a;border-radius:2px;box-shadow:inset 0 0 0 1px #fff9dc"></div>
<svg class="a" style="left:858px;top:266px" width="16" height="16" viewBox="0 0 16 16"><path d="M1 1h14l-5 6v7l-4 2V7z" fill="#8fb4dc" stroke="#1f5fa8" stroke-width="1.3"/></svg>
<div class="a" style="left:877px;top:266px;width:1px;height:16px;background:#e4d594"></div>
<svg class="a" style="left:881px;top:275px" width="5" height="5"><path d="M4 0v4H0z" fill="#111"/></svg>
<div class="a" style="left:898px;top:264px;width:34px;height:20px;background:linear-gradient(#fffbe3,#fdeeb0 30%,#fbe597);border:1px solid #56565a;border-radius:2px;box-shadow:inset 0 0 0 1px #fff9dc"></div>
<svg class="a" style="left:902px;top:266px" width="16" height="16" viewBox="0 0 16 16"><path d="M1 1h13v4h-2l-1-2H5l4 5-4 5h6l1-2h2v4H1v-2l5-5-5-5z" fill="#5aa02c" stroke="#2f7a12" stroke-width="0.8"/></svg>
<div class="a" style="left:920px;top:266px;width:1px;height:16px;background:#e4d594"></div>
<svg class="a" style="left:924px;top:275px" width="5" height="5"><path d="M4 0v4H0z" fill="#111"/></svg>
<div class="a" style="left:934px;top:264px;width:34px;height:20px;background:linear-gradient(#fffbe3,#fdeeb0 30%,#fbe597);border:1px solid #56565a;border-radius:2px;box-shadow:inset 0 0 0 1px #fff9dc"></div>
<svg class="a" style="left:938px;top:266px" width="16" height="16" viewBox="0 0 16 16"><path d="M1 1h7v5H1z" fill="#f9c23c" stroke="#e05a1a"/><path d="M7 9h7v6H7z" fill="#d94a1a"/><path d="M0 16L16 0" stroke="#333"/></svg>
<div class="a" style="left:956px;top:266px;width:1px;height:16px;background:#e4d594"></div>
<svg class="a" style="left:960px;top:275px" width="5" height="5"><path d="M4 0v4H0z" fill="#111"/></svg>
<div class="a" style="left:978px;top:264px;width:24px;height:20px;background:linear-gradient(#fffbe3,#fdeeb0 30%,#fbe597);border:1px solid #56565a;border-radius:2px;box-shadow:inset 0 0 0 1px #fff9dc"></div>
<svg class="a" style="left:982px;top:266px" width="16" height="16" viewBox="0 0 16 16"><path d="M4 1h6l2 2v3H4z" fill="#fff" stroke="#555"/><rect x="1" y="6" width="14" height="5" rx="1" fill="#8fb4dc" stroke="#1f5fa8" stroke-width="1.2"/><rect x="3" y="13" width="10" height="2" fill="#1f5fa8"/></svg>
<div class="a" style="left:1004px;top:264px;width:34px;height:20px;background:linear-gradient(#fffbe3,#fdeeb0 30%,#fbe597);border:1px solid #56565a;border-radius:2px;box-shadow:inset 0 0 0 1px #fff9dc"></div>
<svg class="a" style="left:1008px;top:266px" width="16" height="16" viewBox="0 0 16 16"><rect x="6" y="1" width="8" height="10" fill="#fff" stroke="#1f5fa8"/><path d="M8 4h4M8 6h4M8 8h4" stroke="#1f5fa8"/><circle cx="5" cy="10" r="4.5" fill="#d8e4f0" stroke="#555"/><path d="M5 6v8" stroke="#555"/></svg>
<div class="a" style="left:1026px;top:266px;width:1px;height:16px;background:#e4d594"></div>
<svg class="a" style="left:1030px;top:275px" width="5" height="5"><path d="M4 0v4H0z" fill="#111"/></svg>
<div class="a" style="left:1040px;top:264px;width:34px;height:20px;background:linear-gradient(#fffbe3,#fdeeb0 30%,#fbe597);border:1px solid #56565a;border-radius:2px;box-shadow:inset 0 0 0 1px #fff9dc"></div>
<svg class="a" style="left:1044px;top:266px" width="16" height="16" viewBox="0 0 16 16"><rect x="1" y="1" width="8" height="12" fill="#d8e4f0" stroke="#1f5fa8"/><path d="M7 5h5l3 3v8H7z" fill="#fff" stroke="#555"/><path d="M5 8h5V6l4 3.5-4 3.5v-2H5z" fill="#5aa02c"/></svg>
<div class="a" style="left:1062px;top:266px;width:1px;height:16px;background:#e4d594"></div>
<svg class="a" style="left:1066px;top:275px" width="5" height="5"><path d="M4 0v4H0z" fill="#111"/></svg>
<div class="a" style="left:1076px;top:264px;width:35px;height:20px;background:linear-gradient(#fffbe3,#fdeeb0 30%,#fbe597);border:1px solid #56565a;border-radius:2px;box-shadow:inset 0 0 0 1px #fff9dc"></div>
<svg class="a" style="left:1080px;top:266px" width="16" height="16" viewBox="0 0 16 16"><path d="M5 2h10v12H5z" fill="#fff" stroke="#555"/><path d="M5 6h10M5 10h10M10 2v12" stroke="#555"/><rect x="1" y="5" width="6" height="5" fill="#f9c23c" stroke="#e05a1a"/></svg>
<div class="a" style="left:1099px;top:266px;width:1px;height:16px;background:#e4d594"></div>
<svg class="a" style="left:1103px;top:275px" width="5" height="5"><path d="M4 0v4H0z" fill="#111"/></svg>
<div class="a" style="left:1120px;top:264px;width:25px;height:20px;background:linear-gradient(#fffbe3,#fdeeb0 30%,#fbe597);border:1px solid #56565a;border-radius:2px;box-shadow:inset 0 0 0 1px #fff9dc"></div>
<svg class="a" style="left:1124px;top:266px" width="16" height="16" viewBox="0 0 16 16"><rect x="1" y="1" width="4" height="14" fill="#8fb4dc" stroke="#1f5fa8"/><rect x="8" y="3" width="4" height="12" fill="#f9c23c"/><rect x="6" y="10" width="4" height="5" fill="#5aa02c"/><rect x="11" y="7" width="4" height="8" fill="#d94a1a"/></svg>
<div class="a" style="left:1154px;top:264px;width:25px;height:20px;background:linear-gradient(#fffbe3,#fdeeb0 30%,#fbe597);border:1px solid #56565a;border-radius:2px;box-shadow:inset 0 0 0 1px #fff9dc"></div>
<svg class="a" style="left:1158px;top:266px" width="16" height="16" viewBox="0 0 16 16"><rect x="1" y="1" width="14" height="14" fill="#fff" stroke="#1b73c8" stroke-width="1.6"/><rect x="6.5" y="3" width="3" height="2.4" fill="#1b73c8"/><path d="M5.5 6.4h4v5.3h1.4v1.6H5.1v-1.6h1.4V8h-1z" fill="#1b73c8"/></svg>
<div class="a" style="left:744px;top:267px;width:2px;height:14px;background:#fbfcfd;border-left:1px solid #8f959c"></div>
<div class="a" style="left:893px;top:267px;width:2px;height:14px;background:#fbfcfd;border-left:1px solid #8f959c"></div>
<div class="a" style="left:973px;top:267px;width:2px;height:14px;background:#fbfcfd;border-left:1px solid #8f959c"></div>
<div class="a" style="left:1115px;top:267px;width:2px;height:14px;background:#fbfcfd;border-left:1px solid #8f959c"></div>
<div class="a" style="left:1149px;top:267px;width:2px;height:14px;background:#fbfcfd;border-left:1px solid #8f959c"></div>
<div class="row hd" style="top:287px;height:17px;background:linear-gradient(#e3e6ea,#d6dbe1);border-bottom:1px solid #c5d0dc"><div class="c l" style="left:0px;width:358px;letter-spacing:-0.12px;">SQL Statement</div><div class="c l" style="left:358px;width:181px;letter-spacing:0.01px;">MS SQL Server object name</div><div class="c r" style="left:539px;width:93px;letter-spacing:-0.14px;padding-right:3.14px;"><span class="sig">&Sigma;</span>Calls</div><div class="c r" style="left:632px;width:121px;letter-spacing:0.06px;padding-right:2.94px;"><span class="sig">&Sigma;</span>total Time</div><div class="c r" style="left:753px;width:101px;letter-spacing:0.08px;padding-right:2.92px;"><span class="sig">&Sigma;</span>avg Time</div><div class="c r" style="left:854px;width:113px;letter-spacing:0.06px;padding-right:2.94px;"><span class="sig">&Sigma;</span>tot Reads</div><div class="c r" style="left:967px;width:85px;letter-spacing:0.06px;padding-right:2.94px;"><span class="sig">&Sigma;</span>avg Reads</div><div class="c r" style="left:1052px;width:75px;letter-spacing:0.16px;padding-right:2.84px;"><span class="sig">&Sigma;</span>avg phy Rd</div><div class="c r" style="left:1127px;width:93px;letter-spacing:0.06px;padding-right:2.94px;"><span class="sig">&Sigma;</span>max Reads</div><div class="c r" style="left:1220px;width:101px;letter-spacing:0.10px;padding-right:2.90px;"><span class="sig">&Sigma;</span>ET per row</div><div class="c r" style="left:1321px;width:101px;letter-spacing:0.05px;padding-right:2.95px;"><span class="sig">&Sigma;</span>total Rows</div><div class="c r" style="left:1422px;width:85px;letter-spacing:0.17px;padding-right:2.83px;"><span class="sig">&Sigma;</span>avg rows</div><div class="c r" style="left:1507px;width:85px;letter-spacing:-0.05px;padding-right:3.05px;"><span class="sig">&Sigma;</span>Max Rows</div><div class="c r" style="left:1592px;width:85px;letter-spacing:-0.06px;padding-right:3.06px;"><span class="sig">&Sigma;</span>Min Rows</div><div class="c r" style="left:1677px;width:85px;letter-spacing:-0.01px;padding-right:3.01px;"><span class="sig">&Sigma;</span>Last Rows</div><div class="c" style="left:1762px;width:6px;border-right:none"><span class="sig">&Sigma;</span></div></div>
<div class="row tot" style="top:305px;height:18px;background:#fff53c;"><div class="c l" style="left:0px;width:358px;"></div><div class="c l" style="left:358px;width:181px;"></div><div class="c r" style="left:539px;width:93px;"><span class="sq"></span>37.456.337</div><div class="c r" style="left:632px;width:121px;"><span class="sq"></span>53.928.680.356</div><div class="c r" style="left:753px;width:101px;"><span class="sq"></span>888.279.310</div><div class="c r" style="left:854px;width:113px;"><span class="sq"></span>5.675.721.582</div><div class="c r" style="left:967px;width:85px;"><span class="sq"></span>6.343.235</div><div class="c r" style="left:1052px;width:75px;"><span class="sq"></span>534.851</div><div class="c r" style="left:1127px;width:93px;"><span class="sq"></span>14.050.378</div><div class="c r" style="left:1220px;width:101px;"><span class="sq"></span>240.216.514</div><div class="c r" style="left:1321px;width:101px;"><span class="sq"></span>725.573.229</div><div class="c r" style="left:1422px;width:85px;"><span class="sq"></span>1.570.091</div><div class="c r" style="left:1507px;width:85px;"><span class="sq"></span>2.153.299</div><div class="c r" style="left:1592px;width:85px;"><span class="sq"></span>1.376.736</div><div class="c r" style="left:1677px;width:85px;"><span class="sq"></span>1.884.513</div><div class="c" style="left:1762px;width:6px"><span class="sq" style="left:5px"></span></div></div>
<div class="a" style="left:715px;top:305px;width:357px;height:18px;background:#fddb7e"></div>
<div class="a" style="left:715px;top:323px;width:1767px;height:1px;background:#c3cdd8"></div>
<div class="row" style="top:324px;height:19px;overflow:hidden;background:#e2ecf6;border-bottom:1px solid #c3cdd8"><div class="c l" style="left:0px;width:358px;letter-spacing:-0.21px;">SELECT DISTINCT "MANDT" ,"ARFCIPID" ,"ARFCPID" ,"A</div><div class="c l" style="left:358px;width:181px;letter-spacing:-0.76px;">TRFCQOUT</div><div class="c r" style="left:539px;width:93px;letter-spacing:0.32px;padding-right:7.68px;">7.790</div><div class="c r" style="left:632px;width:121px;letter-spacing:0.33px;padding-right:7.67px;background:#c6f5c0;">10.600.266.449</div><div class="c r" style="left:753px;width:101px;letter-spacing:0.33px;padding-right:7.67px;">1.360.753</div><div class="c r" style="left:854px;width:113px;letter-spacing:0.34px;padding-right:7.66px;">2.650.090.956</div><div class="c r" style="left:967px;width:85px;letter-spacing:0.30px;padding-right:7.70px;">340.191</div><div class="c r" style="left:1052px;width:75px;letter-spacing:0.24px;padding-right:7.76px;">0</div><div class="c r" style="left:1127px;width:93px;letter-spacing:0.33px;padding-right:7.67px;">1.848.086</div><div class="c r" style="left:1220px;width:101px;letter-spacing:0.33px;padding-right:7.67px;">1.667.757</div><div class="c r" style="left:1321px;width:101px;letter-spacing:0.32px;padding-right:7.68px;">6.356</div><div class="c r" style="left:1422px;width:85px;letter-spacing:0.24px;padding-right:7.76px;">0</div><div class="c r" style="left:1507px;width:85px;letter-spacing:0.24px;padding-right:7.76px;">1</div><div class="c r" style="left:1592px;width:85px;letter-spacing:0.24px;padding-right:7.76px;">0</div><div class="c r" style="left:1677px;width:85px;letter-spacing:0.24px;padding-right:7.76px;">1</div><div class="c" style="left:1762px;width:6px;border-right:none"></div></div>
<div class="row" style="top:343px;height:19px;overflow:hidden;background:#d6e1ef;border-bottom:1px solid #c3cdd8"><div class="c l" style="left:0px;width:358px;letter-spacing:-0.15px;">SELECT "ROLE_A" ,"ROLE_B" ,"RELATIONID" ,"BRELTYP"</div><div class="c l" style="left:358px;width:181px;letter-spacing:-0.69px;">IDOCREL</div><div class="c r" style="left:539px;width:93px;letter-spacing:0.32px;padding-right:7.68px;">4.872</div><div class="c r" style="left:632px;width:121px;letter-spacing:0.34px;padding-right:7.66px;background:#c6f5c0;">6.675.314.809</div><div class="c r" style="left:753px;width:101px;letter-spacing:0.33px;padding-right:7.67px;">1.370.138</div><div class="c r" style="left:854px;width:113px;letter-spacing:0.34px;padding-right:7.66px;">2.302.495.971</div><div class="c r" style="left:967px;width:85px;letter-spacing:0.30px;padding-right:7.70px;">472.597</div><div class="c r" style="left:1052px;width:75px;letter-spacing:0.24px;padding-right:7.76px;">4</div><div class="c r" style="left:1127px;width:93px;letter-spacing:0.33px;padding-right:7.67px;">3.559.144</div><div class="c r" style="left:1220px;width:101px;letter-spacing:0.33px;padding-right:7.67px;">2.177.916</div><div class="c r" style="left:1321px;width:101px;letter-spacing:0.32px;padding-right:7.68px;">3.065</div><div class="c r" style="left:1422px;width:85px;letter-spacing:0.24px;padding-right:7.76px;">0</div><div class="c r" style="left:1507px;width:85px;letter-spacing:0.24px;padding-right:7.76px;">66</div><div class="c r" style="left:1592px;width:85px;letter-spacing:0.24px;padding-right:7.76px;">0</div><div class="c r" style="left:1677px;width:85px;letter-spacing:0.24px;padding-right:7.76px;">0</div><div class="c" style="left:1762px;width:6px;border-right:none"></div></div>
<div class="row" style="top:362px;height:19px;overflow:hidden;background:#e2ecf6;border-bottom:1px solid #c3cdd8"><div class="c l" style="left:0px;width:358px;letter-spacing:-0.29px;">SELECT DISTINCT "ARFCIPID" ,"ARFCPID" ,"ARFCTIME"</div><div class="c l" style="left:358px;width:181px;letter-spacing:-0.76px;">TRFCQOUT</div><div class="c r" style="left:539px;width:93px;letter-spacing:0.32px;padding-right:7.68px;">1.583</div><div class="c r" style="left:632px;width:121px;letter-spacing:0.34px;padding-right:7.66px;background:#c6f5c0;">5.383.701.007</div><div class="c r" style="left:753px;width:101px;letter-spacing:0.33px;padding-right:7.67px;">3.400.948</div><div class="c r" style="left:854px;width:113px;letter-spacing:0.32px;padding-right:7.68px;">14.736.242</div><div class="c r" style="left:967px;width:85px;letter-spacing:0.32px;padding-right:7.68px;">9.309</div><div class="c r" style="left:1052px;width:75px;letter-spacing:0.24px;padding-right:7.76px;">6</div><div class="c r" style="left:1127px;width:93px;letter-spacing:0.32px;padding-right:7.68px;">9.330</div><div class="c r" style="left:1220px;width:101px;letter-spacing:0.24px;padding-right:7.76px;">21</div><div class="c r" style="left:1321px;width:101px;letter-spacing:0.32px;padding-right:7.68px;">245.264.475</div><div class="c r" style="left:1422px;width:85px;letter-spacing:0.30px;padding-right:7.70px;">154.936</div><div class="c r" style="left:1507px;width:85px;letter-spacing:0.30px;padding-right:7.70px;">154.948</div><div class="c r" style="left:1592px;width:85px;letter-spacing:0.30px;padding-right:7.70px;">154.931</div><div class="c r" style="left:1677px;width:85px;letter-spacing:0.30px;padding-right:7.70px;">154.948</div><div class="c" style="left:1762px;width:6px;border-right:none"></div></div>
<div class="row" style="top:381px;height:19px;overflow:hidden;background:#d6e1ef;border-bottom:1px solid #c3cdd8"><div class="c l" style="left:0px;width:358px;letter-spacing:-0.17px;">SELECT "MANDT" ,"DOCNUM" ,"DOCREL" ,"STATUS" ,"DOC</div><div class="c l" style="left:358px;width:181px;letter-spacing:-0.68px;">EDIDC</div><div class="c r" style="left:539px;width:93px;letter-spacing:0.32px;padding-right:7.68px;">4.980</div><div class="c r" style="left:632px;width:121px;letter-spacing:0.34px;padding-right:7.66px;background:#c6f5c0;">4.177.234.097</div><div class="c r" style="left:753px;width:101px;letter-spacing:0.30px;padding-right:7.70px;">838.802</div><div class="c r" style="left:854px;width:113px;letter-spacing:0.32px;padding-right:7.68px;">36.408.334</div><div class="c r" style="left:967px;width:85px;letter-spacing:0.32px;padding-right:7.68px;">7.310</div><div class="c r" style="left:1052px;width:75px;letter-spacing:0.24px;padding-right:7.76px;">1</div><div class="c r" style="left:1127px;width:93px;letter-spacing:0.32px;padding-right:7.68px;">7.592</div><div class="c r" style="left:1220px;width:101px;letter-spacing:0.32px;padding-right:7.68px;">126.582.851</div><div class="c r" style="left:1321px;width:101px;letter-spacing:0.24px;padding-right:7.76px;">33</div><div class="c r" style="left:1422px;width:85px;letter-spacing:0.24px;padding-right:7.76px;">0</div><div class="c r" style="left:1507px;width:85px;letter-spacing:0.24px;padding-right:7.76px;">2</div><div class="c r" style="left:1592px;width:85px;letter-spacing:0.24px;padding-right:7.76px;">0</div><div class="c r" style="left:1677px;width:85px;letter-spacing:0.24px;padding-right:7.76px;">0</div><div class="c" style="left:1762px;width:6px;border-right:none"></div></div>
<div class="row" style="top:400px;height:19px;overflow:hidden;background:#e2ecf6;border-bottom:1px solid #c3cdd8"><div class="c l" style="left:0px;width:358px;letter-spacing:-0.12px;">SELECT "MANDT" ,"PDSNR" ,"PERNR" ,"LDATE" ,"LTIME"</div><div class="c l" style="left:358px;width:181px;letter-spacing:-0.73px;">TEVEN</div><div class="c r" style="left:539px;width:93px;letter-spacing:0.32px;padding-right:7.68px;">9.896</div><div class="c r" style="left:632px;width:121px;letter-spacing:0.34px;padding-right:7.66px;background:#c6f5c0;">1.751.571.126</div><div class="c r" style="left:753px;width:101px;letter-spacing:0.30px;padding-right:7.70px;">176.997</div><div class="c r" style="left:854px;width:113px;letter-spacing:0.32px;padding-right:7.68px;">54.608.609</div><div class="c r" style="left:967px;width:85px;letter-spacing:0.32px;padding-right:7.68px;">5.518</div><div class="c r" style="left:1052px;width:75px;letter-spacing:0.24px;padding-right:7.76px;">68</div><div class="c r" style="left:1127px;width:93px;letter-spacing:0.31px;padding-right:7.69px;">19.489</div><div class="c r" style="left:1220px;width:101px;letter-spacing:0.24px;padding-right:7.76px;">97</div><div class="c r" style="left:1321px;width:101px;letter-spacing:0.32px;padding-right:7.68px;">17.970.977</div><div class="c r" style="left:1422px;width:85px;letter-spacing:0.32px;padding-right:7.68px;">1.815</div><div class="c r" style="left:1507px;width:85px;letter-spacing:0.32px;padding-right:7.68px;">6.406</div><div class="c r" style="left:1592px;width:85px;letter-spacing:0.24px;padding-right:7.76px;">0</div><div class="c r" style="left:1677px;width:85px;letter-spacing:0.32px;padding-right:7.68px;">2.484</div><div class="c" style="left:1762px;width:6px;border-right:none"></div></div>
<div class="row" style="top:419px;height:19px;overflow:hidden;background:#d6e1ef;border-bottom:1px solid #c3cdd8"><div class="c l" style="left:0px;width:358px;letter-spacing:-0.17px;">SELECT "MANDT" ,"DOCNUM" ,"DOCREL" ,"STATUS" ,"DOC</div><div class="c l" style="left:358px;width:181px;letter-spacing:-0.68px;">EDIDC</div><div class="c r" style="left:539px;width:93px;letter-spacing:0.32px;padding-right:7.68px;">1.660</div><div class="c r" style="left:632px;width:121px;letter-spacing:0.34px;padding-right:7.66px;background:#c6f5c0;">1.565.530.825</div><div class="c r" style="left:753px;width:101px;letter-spacing:0.30px;padding-right:7.70px;">943.090</div><div class="c r" style="left:854px;width:113px;letter-spacing:0.32px;padding-right:7.68px;">12.135.686</div><div class="c r" style="left:967px;width:85px;letter-spacing:0.32px;padding-right:7.68px;">7.310</div><div class="c r" style="left:1052px;width:75px;letter-spacing:0.24px;padding-right:7.76px;">0</div><div class="c r" style="left:1127px;width:93px;letter-spacing:0.32px;padding-right:7.68px;">7.584</div><div class="c r" style="left:1220px;width:101px;letter-spacing:0.30px;padding-right:7.70px;">308.296</div><div class="c r" style="left:1321px;width:101px;letter-spacing:0.32px;padding-right:7.68px;">5.078</div><div class="c r" style="left:1422px;width:85px;letter-spacing:0.24px;padding-right:7.76px;">3</div><div class="c r" style="left:1507px;width:85px;letter-spacing:0.24px;padding-right:7.76px;">70</div><div class="c r" style="left:1592px;width:85px;letter-spacing:0.24px;padding-right:7.76px;">0</div><div class="c r" style="left:1677px;width:85px;letter-spacing:0.24px;padding-right:7.76px;">0</div><div class="c" style="left:1762px;width:6px;border-right:none"></div></div>
<div class="row" style="top:438px;height:19px;overflow:hidden;background:#e2ecf6;border-bottom:1px solid #c3cdd8"><div class="c l" style="left:0px;width:358px;letter-spacing:0.10px;">SELECT "L" ."TSN" ,"D" ."TID" ,"D" ."MODELNAME" ,"</div><div class="c l" style="left:358px;width:181px;letter-spacing:-0.78px;">ODQTSNLOG</div><div class="c r" style="left:539px;width:93px;letter-spacing:0.24px;padding-right:7.76px;">30</div><div class="c r" style="left:632px;width:121px;letter-spacing:0.34px;padding-right:7.66px;background:#c6f5c0;">1.435.914.921</div><div class="c r" style="left:753px;width:101px;letter-spacing:0.32px;padding-right:7.68px;">47.863.830</div><div class="c r" style="left:854px;width:113px;letter-spacing:0.32px;padding-right:7.68px;">15.212.036</div><div class="c r" style="left:967px;width:85px;letter-spacing:0.30px;padding-right:7.70px;">507.067</div><div class="c r" style="left:1052px;width:75px;letter-spacing:0.32px;padding-right:7.68px;">7.933</div><div class="c r" style="left:1127px;width:93px;letter-spacing:0.33px;padding-right:7.67px;">1.799.415</div><div class="c r" style="left:1220px;width:101px;letter-spacing:0.24px;padding-right:7.76px;">384</div><div class="c r" style="left:1321px;width:101px;letter-spacing:0.33px;padding-right:7.67px;">3.735.702</div><div class="c r" style="left:1422px;width:85px;letter-spacing:0.30px;padding-right:7.70px;">124.523</div><div class="c r" style="left:1507px;width:85px;letter-spacing:0.30px;padding-right:7.70px;">483.417</div><div class="c r" style="left:1592px;width:85px;letter-spacing:0.24px;padding-right:7.76px;">0</div><div class="c r" style="left:1677px;width:85px;letter-spacing:0.30px;padding-right:7.70px;">483.417</div><div class="c" style="left:1762px;width:6px;border-right:none"></div></div>
<div class="row" style="top:457px;height:19px;overflow:hidden;background:#d6e1ef;border-bottom:1px solid #c3cdd8"><div class="c l" style="left:0px;width:358px;letter-spacing:-0.11px;">UPDATE "/BNWVS/UPLHDR" SET "STATE" = @P1 ,"TMSTP"</div><div class="c l" style="left:358px;width:181px;letter-spacing:-0.55px;">/BNWVS/UPLHDR</div><div class="c r" style="left:539px;width:93px;letter-spacing:0.33px;padding-right:7.67px;">1.242.986</div><div class="c r" style="left:632px;width:121px;letter-spacing:0.34px;padding-right:7.66px;background:#c6f5c0;">1.326.639.945</div><div class="c r" style="left:753px;width:101px;letter-spacing:0.32px;padding-right:7.68px;">1.067</div><div class="c r" style="left:854px;width:113px;letter-spacing:0.32px;padding-right:7.68px;">25.410.567</div><div class="c r" style="left:967px;width:85px;letter-spacing:0.24px;padding-right:7.76px;">20</div><div class="c r" style="left:1052px;width:75px;letter-spacing:0.24px;padding-right:7.76px;">0</div><div class="c r" style="left:1127px;width:93px;letter-spacing:0.24px;padding-right:7.76px;">135</div><div class="c r" style="left:1220px;width:101px;letter-spacing:0.32px;padding-right:7.68px;">1.072</div><div class="c r" style="left:1321px;width:101px;letter-spacing:0.33px;padding-right:7.67px;">1.237.052</div><div class="c r" style="left:1422px;width:85px;letter-spacing:0.24px;padding-right:7.76px;">0</div><div class="c r" style="left:1507px;width:85px;letter-spacing:0.24px;padding-right:7.76px;">1</div><div class="c r" style="left:1592px;width:85px;letter-spacing:0.24px;padding-right:7.76px;">0</div><div class="c r" style="left:1677px;width:85px;letter-spacing:0.24px;padding-right:7.76px;">1</div><div class="c" style="left:1762px;width:6px;border-right:none"></div></div>
<div class="row" style="top:476px;height:19px;overflow:hidden;background:#e2ecf6;border-bottom:1px solid #c3cdd8"><div class="c l" style="left:0px;width:358px;letter-spacing:0.06px;">SELECT "M1" ."GUID" ,"M1" ."DATA_GROUP" ,"M1" ."SU</div><div class="c l" style="left:358px;width:181px;letter-spacing:-0.25px;">/BNWVS/MTR_01</div><div class="c r" style="left:539px;width:93px;letter-spacing:0.32px;padding-right:7.68px;">3.559</div><div class="c r" style="left:632px;width:121px;letter-spacing:0.34px;padding-right:7.66px;background:#c6f5c0;">1.087.852.910</div><div class="c r" style="left:753px;width:101px;letter-spacing:0.30px;padding-right:7.70px;">305.662</div><div class="c r" style="left:854px;width:113px;letter-spacing:0.33px;padding-right:7.67px;">8.801.834</div><div class="c r" style="left:967px;width:85px;letter-spacing:0.32px;padding-right:7.68px;">2.473</div><div class="c r" style="left:1052px;width:75px;letter-spacing:0.24px;padding-right:7.76px;">14</div><div class="c r" style="left:1127px;width:93px;letter-spacing:0.31px;padding-right:7.69px;">16.096</div><div class="c r" style="left:1220px;width:101px;letter-spacing:0.32px;padding-right:7.68px;">6.113</div><div class="c r" style="left:1321px;width:101px;letter-spacing:0.30px;padding-right:7.70px;">177.950</div><div class="c r" style="left:1422px;width:85px;letter-spacing:0.24px;padding-right:7.76px;">50</div><div class="c r" style="left:1507px;width:85px;letter-spacing:0.24px;padding-right:7.76px;">50</div><div class="c r" style="left:1592px;width:85px;letter-spacing:0.24px;padding-right:7.76px;">50</div><div class="c r" style="left:1677px;width:85px;letter-spacing:0.24px;padding-right:7.76px;">50</div><div class="c" style="left:1762px;width:6px;border-right:none"></div></div>
<div class="row" style="top:495px;height:19px;overflow:hidden;background:#d6e1ef;border-bottom:1px solid #c3cdd8"><div class="c l" style="left:0px;width:358px;letter-spacing:0.06px;">SELECT "M1" ."GUID" ,"M1" ."DATA_GROUP" ,"M1" ."SU</div><div class="c l" style="left:358px;width:181px;letter-spacing:-0.25px;">/BNWVS/MTR_05</div><div class="c r" style="left:539px;width:93px;letter-spacing:0.32px;padding-right:7.68px;">1.547</div><div class="c r" style="left:632px;width:121px;letter-spacing:0.34px;padding-right:7.66px;background:#c6f5c0;">1.057.298.061</div><div class="c r" style="left:753px;width:101px;letter-spacing:0.30px;padding-right:7.70px;">683.450</div><div class="c r" style="left:854px;width:113px;letter-spacing:0.33px;padding-right:7.67px;">3.390.194</div><div class="c r" style="left:967px;width:85px;letter-spacing:0.32px;padding-right:7.68px;">2.191</div><div class="c r" style="left:1052px;width:75px;letter-spacing:0.24px;padding-right:7.76px;">113</div><div class="c r" style="left:1127px;width:93px;letter-spacing:0.31px;padding-right:7.69px;">11.701</div><div class="c r" style="left:1220px;width:101px;letter-spacing:0.31px;padding-right:7.69px;">13.669</div><div class="c r" style="left:1321px;width:101px;letter-spacing:0.31px;padding-right:7.69px;">77.350</div><div class="c r" style="left:1422px;width:85px;letter-spacing:0.24px;padding-right:7.76px;">50</div><div class="c r" style="left:1507px;width:85px;letter-spacing:0.24px;padding-right:7.76px;">50</div><div class="c r" style="left:1592px;width:85px;letter-spacing:0.24px;padding-right:7.76px;">50</div><div class="c r" style="left:1677px;width:85px;letter-spacing:0.24px;padding-right:7.76px;">50</div><div class="c" style="left:1762px;width:6px;border-right:none"></div></div>
<div class="row" style="top:514px;height:19px;overflow:hidden;background:#e2ecf6;border-bottom:1px solid #c3cdd8"><div class="c l" style="left:0px;width:358px;letter-spacing:0.07px;">SELECT DTST.[session_id],   DES.[login_name] AS [L</div><div class="c l" style="left:358px;width:181px;letter-spacing:0.16px;">dm_tran_database_transactions</div><div class="c r" style="left:539px;width:93px;letter-spacing:0.32px;padding-right:7.68px;">1.660</div><div class="c r" style="left:632px;width:121px;letter-spacing:0.32px;padding-right:7.68px;background:#c6f5c0;">574.252.112</div><div class="c r" style="left:753px;width:101px;letter-spacing:0.30px;padding-right:7.70px;">345.935</div><div class="c r" style="left:854px;width:113px;letter-spacing:0.33px;padding-right:7.67px;">1.229.983</div><div class="c r" style="left:967px;width:85px;letter-spacing:0.24px;padding-right:7.76px;">740</div><div class="c r" style="left:1052px;width:75px;letter-spacing:0.24px;padding-right:7.76px;">0</div><div class="c r" style="left:1127px;width:93px;letter-spacing:0.31px;padding-right:7.69px;">41.065</div><div class="c r" style="left:1220px;width:101px;letter-spacing:0.31px;padding-right:7.69px;">67.447</div><div class="c r" style="left:1321px;width:101px;letter-spacing:0.32px;padding-right:7.68px;">8.514</div><div class="c r" style="left:1422px;width:85px;letter-spacing:0.24px;padding-right:7.76px;">5</div><div class="c r" style="left:1507px;width:85px;letter-spacing:0.24px;padding-right:7.76px;">26</div><div class="c r" style="left:1592px;width:85px;letter-spacing:0.24px;padding-right:7.76px;">1</div><div class="c r" style="left:1677px;width:85px;letter-spacing:0.24px;padding-right:7.76px;">4</div><div class="c" style="left:1762px;width:6px;border-right:none"></div></div>
<div class="row" style="top:533px;height:19px;overflow:hidden;background:#d6e1ef;border-bottom:1px solid #c3cdd8"><div class="c l" style="left:0px;width:358px;letter-spacing:-0.12px;">SELECT TOP ( @P1 ) "PROCNAME" ,"DBRELEASE" ,"REVIS</div><div class="c l" style="left:358px;width:181px;letter-spacing:-0.78px;">MSSSOURCE</div><div class="c r" style="left:539px;width:93px;letter-spacing:0.31px;padding-right:7.69px;">21.021</div><div class="c r" style="left:632px;width:121px;letter-spacing:0.32px;padding-right:7.68px;background:#c6f5c0;">572.252.963</div><div class="c r" style="left:753px;width:101px;letter-spacing:0.31px;padding-right:7.69px;">27.222</div><div class="c r" style="left:854px;width:113px;letter-spacing:0.30px;padding-right:7.70px;">233.522</div><div class="c r" style="left:967px;width:85px;letter-spacing:0.24px;padding-right:7.76px;">11</div><div class="c r" style="left:1052px;width:75px;letter-spacing:0.24px;padding-right:7.76px;">0</div><div class="c r" style="left:1127px;width:93px;letter-spacing:0.24px;padding-right:7.76px;">14</div><div class="c r" style="left:1220px;width:101px;letter-spacing:0.24px;padding-right:7.76px;">35</div><div class="c r" style="left:1321px;width:101px;letter-spacing:0.32px;padding-right:7.68px;">16.246.497</div><div class="c r" style="left:1422px;width:85px;letter-spacing:0.24px;padding-right:7.76px;">772</div><div class="c r" style="left:1507px;width:85px;letter-spacing:0.32px;padding-right:7.68px;">1.689</div><div class="c r" style="left:1592px;width:85px;letter-spacing:0.24px;padding-right:7.76px;">4</div><div class="c r" style="left:1677px;width:85px;letter-spacing:0.24px;padding-right:7.76px;">513</div><div class="c" style="left:1762px;width:6px;border-right:none"></div></div>
<div class="row" style="top:552px;height:19px;overflow:hidden;background:#e2ecf6;border-bottom:1px solid #c3cdd8"><div class="c l" style="left:0px;width:358px;letter-spacing:-0.23px;">SELECT DISTINCT "TRFCQIN" ."ARFCIPID" ,"TRFCQIN" .</div><div class="c l" style="left:358px;width:181px;letter-spacing:-0.69px;">TRFCQIN</div><div class="c r" style="left:539px;width:93px;letter-spacing:0.32px;padding-right:7.68px;">1.350</div><div class="c r" style="left:632px;width:121px;letter-spacing:0.32px;padding-right:7.68px;background:#c6f5c0;">564.327.098</div><div class="c r" style="left:753px;width:101px;letter-spacing:0.30px;padding-right:7.70px;">418.020</div><div class="c r" style="left:854px;width:113px;letter-spacing:0.30px;padding-right:7.70px;">333.834</div><div class="c r" style="left:967px;width:85px;letter-spacing:0.24px;padding-right:7.76px;">247</div><div class="c r" style="left:1052px;width:75px;letter-spacing:0.24px;padding-right:7.76px;">0</div><div class="c r" style="left:1127px;width:93px;letter-spacing:0.24px;padding-right:7.76px;">249</div><div class="c r" style="left:1220px;width:101px;letter-spacing:0.24px;padding-right:7.76px;">22</div><div class="c r" style="left:1321px;width:101px;letter-spacing:0.32px;padding-right:7.68px;">24.632.253</div><div class="c r" style="left:1422px;width:85px;letter-spacing:0.31px;padding-right:7.69px;">18.246</div><div class="c r" style="left:1507px;width:85px;letter-spacing:0.31px;padding-right:7.69px;">18.399</div><div class="c r" style="left:1592px;width:85px;letter-spacing:0.31px;padding-right:7.69px;">18.093</div><div class="c r" style="left:1677px;width:85px;letter-spacing:0.31px;padding-right:7.69px;">18.399</div><div class="c" style="left:1762px;width:6px;border-right:none"></div></div>
<div class="row" style="top:571px;height:19px;overflow:hidden;background:#d6e1ef;border-bottom:1px solid #c3cdd8"><div class="c l" style="left:0px;width:358px;letter-spacing:-0.20px;">SELECT TOP 1 COUNT_BIG(*) FROM "TST03M" WHERE "DCL</div><div class="c l" style="left:358px;width:181px;letter-spacing:-0.42px;">TST03M</div><div class="c r" style="left:539px;width:93px;letter-spacing:0.31px;padding-right:7.69px;">58.731</div><div class="c r" style="left:632px;width:121px;letter-spacing:0.32px;padding-right:7.68px;background:#c6f5c0;">501.966.052</div><div class="c r" style="left:753px;width:101px;letter-spacing:0.32px;padding-right:7.68px;">8.546</div><div class="c r" style="left:854px;width:113px;letter-spacing:0.30px;padding-right:7.70px;">417.995</div><div class="c r" style="left:967px;width:85px;letter-spacing:0.24px;padding-right:7.76px;">7</div><div class="c r" style="left:1052px;width:75px;letter-spacing:0.24px;padding-right:7.76px;">1</div><div class="c r" style="left:1127px;width:93px;letter-spacing:0.32px;padding-right:7.68px;">2.885</div><div class="c r" style="left:1220px;width:101px;letter-spacing:0.32px;padding-right:7.68px;">8.546</div><div class="c r" style="left:1321px;width:101px;letter-spacing:0.31px;padding-right:7.69px;">58.731</div><div class="c r" style="left:1422px;width:85px;letter-spacing:0.24px;padding-right:7.76px;">1</div><div class="c r" style="left:1507px;width:85px;letter-spacing:0.24px;padding-right:7.76px;">1</div><div class="c r" style="left:1592px;width:85px;letter-spacing:0.24px;padding-right:7.76px;">1</div><div class="c r" style="left:1677px;width:85px;letter-spacing:0.24px;padding-right:7.76px;">1</div><div class="c" style="left:1762px;width:6px;border-right:none"></div></div>
<div class="row" style="top:590px;height:19px;overflow:hidden;background:#e2ecf6;border-bottom:1px solid #c3cdd8"><div class="c l" style="left:0px;width:358px;letter-spacing:0.07px;">SELECT TOP ( 1) "R" ."OBJ_NAME" ,"R" ."OBJECT" ,"R</div><div class="c l" style="left:358px;width:181px;letter-spacing:-0.76px;">COVREF</div><div class="c r" style="left:539px;width:93px;letter-spacing:0.30px;padding-right:7.70px;">258.352</div><div class="c r" style="left:632px;width:121px;letter-spacing:0.32px;padding-right:7.68px;background:#c6f5c0;">495.169.508</div><div class="c r" style="left:753px;width:101px;letter-spacing:0.32px;padding-right:7.68px;">1.916</div><div class="c r" style="left:854px;width:113px;letter-spacing:0.33px;padding-right:7.67px;">6.361.272</div><div class="c r" style="left:967px;width:85px;letter-spacing:0.24px;padding-right:7.76px;">24</div><div class="c r" style="left:1052px;width:75px;letter-spacing:0.24px;padding-right:7.76px;">0</div><div class="c r" style="left:1127px;width:93px;letter-spacing:0.32px;padding-right:7.68px;">1.762</div><div class="c r" style="left:1220px;width:101px;letter-spacing:0.32px;padding-right:7.68px;">1.916</div><div class="c r" style="left:1321px;width:101px;letter-spacing:0.30px;padding-right:7.70px;">258.352</div><div class="c r" style="left:1422px;width:85px;letter-spacing:0.24px;padding-right:7.76px;">1</div><div class="c r" style="left:1507px;width:85px;letter-spacing:0.24px;padding-right:7.76px;">1</div><div class="c r" style="left:1592px;width:85px;letter-spacing:0.24px;padding-right:7.76px;">1</div><div class="c r" style="left:1677px;width:85px;letter-spacing:0.24px;padding-right:7.76px;">1</div><div class="c" style="left:1762px;width:6px;border-right:none"></div></div>
<div class="row" style="top:609px;height:19px;overflow:hidden;background:#d6e1ef;border-bottom:1px solid #c3cdd8"><div class="c l" style="left:0px;width:358px;letter-spacing:-0.30px;">SELECT "LDATA" FROM "REPOLOAD" WHERE "PROGNAME" =</div><div class="c l" style="left:358px;width:181px;letter-spacing:-0.76px;">REPOLOAD</div><div class="c r" style="left:539px;width:93px;letter-spacing:0.31px;padding-right:7.69px;">10.259</div><div class="c r" style="left:632px;width:121px;letter-spacing:0.32px;padding-right:7.68px;background:#c6f5c0;">463.066.792</div><div class="c r" style="left:753px;width:101px;letter-spacing:0.31px;padding-right:7.69px;">45.137</div><div class="c r" style="left:854px;width:113px;letter-spacing:0.30px;padding-right:7.70px;">220.108</div><div class="c r" style="left:967px;width:85px;letter-spacing:0.24px;padding-right:7.76px;">21</div><div class="c r" style="left:1052px;width:75px;letter-spacing:0.24px;padding-right:7.76px;">5</div><div class="c r" style="left:1127px;width:93px;letter-spacing:0.24px;padding-right:7.76px;">862</div><div class="c r" style="left:1220px;width:101px;letter-spacing:0.31px;padding-right:7.69px;">45.137</div><div class="c r" style="left:1321px;width:101px;letter-spacing:0.31px;padding-right:7.69px;">10.259</div><div class="c r" style="left:1422px;width:85px;letter-spacing:0.24px;padding-right:7.76px;">1</div><div class="c r" style="left:1507px;width:85px;letter-spacing:0.24px;padding-right:7.76px;">1</div><div class="c r" style="left:1592px;width:85px;letter-spacing:0.24px;padding-right:7.76px;">1</div><div class="c r" style="left:1677px;width:85px;letter-spacing:0.24px;padding-right:7.76px;">1</div><div class="c" style="left:1762px;width:6px;border-right:none"></div></div>
<div class="row" style="top:628px;height:19px;overflow:hidden;background:#e2ecf6;border-bottom:1px solid #c3cdd8"><div class="c l" style="left:0px;width:358px;letter-spacing:-0.21px;">SELECT "TADIR" ."DEVCLASS" FROM ( "TADIR" INNER JO</div><div class="c l" style="left:358px;width:181px;letter-spacing:-0.66px;">TADIR</div><div class="c r" style="left:539px;width:93px;letter-spacing:0.32px;padding-right:7.68px;">5.170</div><div class="c r" style="left:632px;width:121px;letter-spacing:0.32px;padding-right:7.68px;background:#c6f5c0;">444.808.067</div><div class="c r" style="left:753px;width:101px;letter-spacing:0.31px;padding-right:7.69px;">86.036</div><div class="c r" style="left:854px;width:113px;letter-spacing:0.32px;padding-right:7.68px;">21.479.312</div><div class="c r" style="left:967px;width:85px;letter-spacing:0.32px;padding-right:7.68px;">4.154</div><div class="c r" style="left:1052px;width:75px;letter-spacing:0.24px;padding-right:7.76px;">35</div><div class="c r" style="left:1127px;width:93px;letter-spacing:0.30px;padding-right:7.70px;">312.863</div><div class="c r" style="left:1220px;width:101px;letter-spacing:0.24px;padding-right:7.76px;">427</div><div class="c r" style="left:1321px;width:101px;letter-spacing:0.33px;padding-right:7.67px;">1.041.250</div><div class="c r" style="left:1422px;width:85px;letter-spacing:0.24px;padding-right:7.76px;">201</div><div class="c r" style="left:1507px;width:85px;letter-spacing:0.31px;padding-right:7.69px;">13.844</div><div class="c r" style="left:1592px;width:85px;letter-spacing:0.24px;padding-right:7.76px;">0</div><div class="c r" style="left:1677px;width:85px;letter-spacing:0.24px;padding-right:7.76px;">179</div><div class="c" style="left:1762px;width:6px;border-right:none"></div></div>
<div class="row" style="top:647px;height:19px;overflow:hidden;background:#d6e1ef;border-bottom:1px solid #c3cdd8"><div class="c l" style="left:0px;width:358px;letter-spacing:-0.13px;">SELECT "OTYPE" ,"NAME" ,"INCLUDE" ,"DIRECT" ,"INDI</div><div class="c l" style="left:358px;width:181px;letter-spacing:-0.80px;">WBCROSSGT</div><div class="c r" style="left:539px;width:93px;letter-spacing:0.24px;padding-right:7.76px;">1</div><div class="c r" style="left:632px;width:121px;letter-spacing:0.32px;padding-right:7.68px;background:#c6f5c0;">444.738.985</div><div class="c r" style="left:753px;width:101px;letter-spacing:0.32px;padding-right:7.68px;">444.738.985</div><div class="c r" style="left:854px;width:113px;letter-spacing:0.30px;padding-right:7.70px;">347.942</div><div class="c r" style="left:967px;width:85px;letter-spacing:0.30px;padding-right:7.70px;">347.942</div><div class="c r" style="left:1052px;width:75px;letter-spacing:0.30px;padding-right:7.70px;">339.990</div><div class="c r" style="left:1127px;width:93px;letter-spacing:0.30px;padding-right:7.70px;">347.942</div><div class="c r" style="left:1220px;width:101px;letter-spacing:0.31px;padding-right:7.69px;">74.783</div><div class="c r" style="left:1321px;width:101px;letter-spacing:0.32px;padding-right:7.68px;">5.947</div><div class="c r" style="left:1422px;width:85px;letter-spacing:0.32px;padding-right:7.68px;">5.947</div><div class="c r" style="left:1507px;width:85px;letter-spacing:0.32px;padding-right:7.68px;">5.947</div><div class="c r" style="left:1592px;width:85px;letter-spacing:0.32px;padding-right:7.68px;">5.947</div><div class="c r" style="left:1677px;width:85px;letter-spacing:0.32px;padding-right:7.68px;">5.947</div><div class="c" style="left:1762px;width:6px;border-right:none"></div></div>
<div class="row" style="top:666px;height:19px;overflow:hidden;background:#e2ecf6;border-bottom:1px solid #c3cdd8"><div class="c l" style="left:0px;width:358px;letter-spacing:-0.29px;">SELECT "BFUNCTION" FROM "SFW_ACTIVE_B2" WHERE "VER</div><div class="c l" style="left:358px;width:181px;letter-spacing:-0.33px;">SFW_ACTIVE_B2</div><div class="c r" style="left:539px;width:93px;letter-spacing:0.30px;padding-right:7.70px;">589.587</div><div class="c r" style="left:632px;width:121px;letter-spacing:0.32px;padding-right:7.68px;background:#c6f5c0;">438.181.345</div><div class="c r" style="left:753px;width:101px;letter-spacing:0.24px;padding-right:7.76px;">743</div><div class="c r" style="left:854px;width:113px;letter-spacing:0.33px;padding-right:7.67px;">2.358.350</div><div class="c r" style="left:967px;width:85px;letter-spacing:0.24px;padding-right:7.76px;">4</div><div class="c r" style="left:1052px;width:75px;letter-spacing:0.24px;padding-right:7.76px;">0</div><div class="c r" style="left:1127px;width:93px;letter-spacing:0.24px;padding-right:7.76px;">6</div><div class="c r" style="left:1220px;width:101px;letter-spacing:0.24px;padding-right:7.76px;">1</div><div class="c r" style="left:1321px;width:101px;letter-spacing:0.32px;padding-right:7.68px;">234.066.039</div><div class="c r" style="left:1422px;width:85px;letter-spacing:0.24px;padding-right:7.76px;">397</div><div class="c r" style="left:1507px;width:85px;letter-spacing:0.24px;padding-right:7.76px;">397</div><div class="c r" style="left:1592px;width:85px;letter-spacing:0.24px;padding-right:7.76px;">397</div><div class="c r" style="left:1677px;width:85px;letter-spacing:0.24px;padding-right:7.76px;">397</div><div class="c" style="left:1762px;width:6px;border-right:none"></div></div>
<div class="row" style="top:685px;height:19px;overflow:hidden;background:#d6e1ef;border-bottom:1px solid #c3cdd8"><div class="c l" style="left:0px;width:358px;letter-spacing:-0.21px;">INSERT INTO "BALHDR" ( "MANDANT" ,"LOGNUMBER" ,"OB</div><div class="c l" style="left:358px;width:181px;letter-spacing:-0.74px;">BALHDR</div><div class="c r" style="left:539px;width:93px;letter-spacing:0.33px;padding-right:7.67px;">1.410.073</div><div class="c r" style="left:632px;width:121px;letter-spacing:0.32px;padding-right:7.68px;background:#c6f5c0;">423.379.971</div><div class="c r" style="left:753px;width:101px;letter-spacing:0.24px;padding-right:7.76px;">300</div><div class="c r" style="left:854px;width:113px;letter-spacing:0.32px;padding-right:7.68px;">34.097.034</div><div class="c r" style="left:967px;width:85px;letter-spacing:0.24px;padding-right:7.76px;">24</div><div class="c r" style="left:1052px;width:75px;letter-spacing:0.24px;padding-right:7.76px;">0</div><div class="c r" style="left:1127px;width:93px;letter-spacing:0.24px;padding-right:7.76px;">271</div><div class="c r" style="left:1220px;width:101px;letter-spacing:0.24px;padding-right:7.76px;">300</div><div class="c r" style="left:1321px;width:101px;letter-spacing:0.33px;padding-right:7.67px;">1.410.073</div><div class="c r" style="left:1422px;width:85px;letter-spacing:0.24px;padding-right:7.76px;">1</div><div class="c r" style="left:1507px;width:85px;letter-spacing:0.24px;padding-right:7.76px;">1</div><div class="c r" style="left:1592px;width:85px;letter-spacing:0.24px;padding-right:7.76px;">1</div><div class="c r" style="left:1677px;width:85px;letter-spacing:0.24px;padding-right:7.76px;">1</div><div class="c" style="left:1762px;width:6px;border-right:none"></div></div>
<div class="row" style="top:704px;height:19px;overflow:hidden;background:#e2ecf6;border-bottom:1px solid #c3cdd8"><div class="c l" style="left:0px;width:358px;letter-spacing:-0.20px;">SELECT TOP 1 "UNAME" ,"MOTIF" ,"PCMODE" ,"LOWERCAS</div><div class="c l" style="left:358px;width:181px;letter-spacing:-0.80px;">RSEUMOD</div><div class="c r" style="left:539px;width:93px;letter-spacing:0.30px;padding-right:7.70px;">145.789</div><div class="c r" style="left:632px;width:121px;letter-spacing:0.32px;padding-right:7.68px;background:#c6f5c0;">406.553.229</div><div class="c r" style="left:753px;width:101px;letter-spacing:0.32px;padding-right:7.68px;">2.788</div><div class="c r" style="left:854px;width:113px;letter-spacing:0.30px;padding-right:7.70px;">291.580</div><div class="c r" style="left:967px;width:85px;letter-spacing:0.24px;padding-right:7.76px;">2</div><div class="c r" style="left:1052px;width:75px;letter-spacing:0.24px;padding-right:7.76px;">0</div><div class="c r" style="left:1127px;width:93px;letter-spacing:0.24px;padding-right:7.76px;">4</div><div class="c r" style="left:1220px;width:101px;letter-spacing:0.32px;padding-right:7.68px;">2.861</div><div class="c r" style="left:1321px;width:101px;letter-spacing:0.30px;padding-right:7.70px;">142.089</div><div class="c r" style="left:1422px;width:85px;letter-spacing:0.24px;padding-right:7.76px;">0</div><div class="c r" style="left:1507px;width:85px;letter-spacing:0.24px;padding-right:7.76px;">1</div><div class="c r" style="left:1592px;width:85px;letter-spacing:0.24px;padding-right:7.76px;">0</div><div class="c r" style="left:1677px;width:85px;letter-spacing:0.24px;padding-right:7.76px;">1</div><div class="c" style="left:1762px;width:6px;border-right:none"></div></div>
<div class="row" style="top:723px;height:19px;overflow:hidden;background:#d6e1ef;border-bottom:1px solid #c3cdd8"><div class="c l" style="left:0px;width:358px;letter-spacing:-0.16px;">SELECT "MANDT" ,"GROUP_DEF" ,"WAIT_PERIOD" ,"ERR_R</div><div class="c l" style="left:358px;width:181px;letter-spacing:-0.34px;">/BNWVS/GRP_DEF_C</div><div class="c r" style="left:539px;width:93px;letter-spacing:0.31px;padding-right:7.69px;">54.098</div><div class="c r" style="left:632px;width:121px;letter-spacing:0.32px;padding-right:7.68px;background:#c6f5c0;">392.222.743</div><div class="c r" style="left:753px;width:101px;letter-spacing:0.32px;padding-right:7.68px;">7.250</div><div class="c r" style="left:854px;width:113px;letter-spacing:0.30px;padding-right:7.70px;">162.296</div><div class="c r" style="left:967px;width:85px;letter-spacing:0.24px;padding-right:7.76px;">3</div><div class="c r" style="left:1052px;width:75px;letter-spacing:0.24px;padding-right:7.76px;">0</div><div class="c r" style="left:1127px;width:93px;letter-spacing:0.24px;padding-right:7.76px;">5</div><div class="c r" style="left:1220px;width:101px;letter-spacing:0.24px;padding-right:7.76px;">28</div><div class="c r" style="left:1321px;width:101px;letter-spacing:0.32px;padding-right:7.68px;">13.903.186</div><div class="c r" style="left:1422px;width:85px;letter-spacing:0.24px;padding-right:7.76px;">257</div><div class="c r" style="left:1507px;width:85px;letter-spacing:0.24px;padding-right:7.76px;">257</div><div class="c r" style="left:1592px;width:85px;letter-spacing:0.24px;padding-right:7.76px;">257</div><div class="c r" style="left:1677px;width:85px;letter-spacing:0.24px;padding-right:7.76px;">257</div><div class="c" style="left:1762px;width:6px;border-right:none"></div></div>
<div class="row" style="top:742px;height:19px;overflow:hidden;background:#e2ecf6;border-bottom:1px solid #c3cdd8"><div class="c l" style="left:0px;width:358px;letter-spacing:-0.19px;">SELECT TOP 1 "JOBNAME" ,"JOBCOUNT" ,"JOBGROUP" ,"I</div><div class="c l" style="left:358px;width:181px;letter-spacing:-0.74px;">TBTCO</div><div class="c r" style="left:539px;width:93px;letter-spacing:0.30px;padding-right:7.70px;">141.727</div><div class="c r" style="left:632px;width:121px;letter-spacing:0.32px;padding-right:7.68px;background:#c6f5c0;">378.662.104</div><div class="c r" style="left:753px;width:101px;letter-spacing:0.32px;padding-right:7.68px;">2.671</div><div class="c r" style="left:854px;width:113px;letter-spacing:0.30px;padding-right:7.70px;">672.528</div><div class="c r" style="left:967px;width:85px;letter-spacing:0.24px;padding-right:7.76px;">4</div><div class="c r" style="left:1052px;width:75px;letter-spacing:0.24px;padding-right:7.76px;">0</div><div class="c r" style="left:1127px;width:93px;letter-spacing:0.24px;padding-right:7.76px;">8</div><div class="c r" style="left:1220px;width:101px;letter-spacing:0.32px;padding-right:7.68px;">2.671</div><div class="c r" style="left:1321px;width:101px;letter-spacing:0.30px;padding-right:7.70px;">141.727</div><div class="c r" style="left:1422px;width:85px;letter-spacing:0.24px;padding-right:7.76px;">1</div><div class="c r" style="left:1507px;width:85px;letter-spacing:0.24px;padding-right:7.76px;">1</div><div class="c r" style="left:1592px;width:85px;letter-spacing:0.24px;padding-right:7.76px;">1</div><div class="c r" style="left:1677px;width:85px;letter-spacing:0.24px;padding-right:7.76px;">1</div><div class="c" style="left:1762px;width:6px;border-right:none"></div></div>
<div class="row" style="top:761px;height:19px;overflow:hidden;background:#d6e1ef;border-bottom:1px solid #c3cdd8"><div class="c l" style="left:0px;width:358px;letter-spacing:-0.23px;">SELECT DISTINCT "MANDT" ,"QNAME" ,"DEST" FROM "TRF</div><div class="c l" style="left:358px;width:181px;letter-spacing:-0.76px;">TRFCQOUT</div><div class="c r" style="left:539px;width:93px;letter-spacing:0.31px;padding-right:7.69px;">97.713</div><div class="c r" style="left:632px;width:121px;letter-spacing:0.32px;padding-right:7.68px;background:#c6f5c0;">370.430.245</div><div class="c r" style="left:753px;width:101px;letter-spacing:0.32px;padding-right:7.68px;">3.791</div><div class="c r" style="left:854px;width:113px;letter-spacing:0.33px;padding-right:7.67px;">3.043.407</div><div class="c r" style="left:967px;width:85px;letter-spacing:0.24px;padding-right:7.76px;">31</div><div class="c r" style="left:1052px;width:75px;letter-spacing:0.24px;padding-right:7.76px;">0</div><div class="c r" style="left:1127px;width:93px;letter-spacing:0.32px;padding-right:7.68px;">1.113</div><div class="c r" style="left:1220px;width:101px;letter-spacing:0.31px;padding-right:7.69px;">37.576</div><div class="c r" style="left:1321px;width:101px;letter-spacing:0.32px;padding-right:7.68px;">9.858</div><div class="c r" style="left:1422px;width:85px;letter-spacing:0.24px;padding-right:7.76px;">0</div><div class="c r" style="left:1507px;width:85px;letter-spacing:0.24px;padding-right:7.76px;">1</div><div class="c r" style="left:1592px;width:85px;letter-spacing:0.24px;padding-right:7.76px;">0</div><div class="c r" style="left:1677px;width:85px;letter-spacing:0.24px;padding-right:7.76px;">0</div><div class="c" style="left:1762px;width:6px;border-right:none"></div></div>
<div class="row" style="top:780px;height:19px;overflow:hidden;background:#e2ecf6;border-bottom:1px solid #c3cdd8"><div class="c l" style="left:0px;width:358px;letter-spacing:-0.26px;">MERGE INTO "BALDAT" WITH (UPDLOCK) AS t USING (VAL</div><div class="c l" style="left:358px;width:181px;letter-spacing:-0.71px;">BALDAT</div><div class="c r" style="left:539px;width:93px;letter-spacing:0.33px;padding-right:7.67px;">4.294.540</div><div class="c r" style="left:632px;width:121px;letter-spacing:0.32px;padding-right:7.68px;background:#c6f5c0;">356.032.883</div><div class="c r" style="left:753px;width:101px;letter-spacing:0.24px;padding-right:7.76px;">82</div><div class="c r" style="left:854px;width:113px;letter-spacing:0.32px;padding-right:7.68px;">50.105.405</div><div class="c r" style="left:967px;width:85px;letter-spacing:0.24px;padding-right:7.76px;">11</div><div class="c r" style="left:1052px;width:75px;letter-spacing:0.24px;padding-right:7.76px;">0</div><div class="c r" style="left:1127px;width:93px;letter-spacing:0.24px;padding-right:7.76px;">146</div><div class="c r" style="left:1220px;width:101px;letter-spacing:0.24px;padding-right:7.76px;">82</div><div class="c r" style="left:1321px;width:101px;letter-spacing:0.33px;padding-right:7.67px;">4.294.540</div><div class="c r" style="left:1422px;width:85px;letter-spacing:0.24px;padding-right:7.76px;">1</div><div class="c r" style="left:1507px;width:85px;letter-spacing:0.24px;padding-right:7.76px;">1</div><div class="c r" style="left:1592px;width:85px;letter-spacing:0.24px;padding-right:7.76px;">1</div><div class="c r" style="left:1677px;width:85px;letter-spacing:0.24px;padding-right:7.76px;">1</div><div class="c" style="left:1762px;width:6px;border-right:none"></div></div>
<div class="row" style="top:799px;height:19px;overflow:hidden;background:#d6e1ef;border-bottom:1px solid #c3cdd8"><div class="c l" style="left:0px;width:358px;letter-spacing:-0.09px;">UPDATE "TBTCO" SET "JOBGROUP" = @P1 ,"INTREPORT" =</div><div class="c l" style="left:358px;width:181px;letter-spacing:-0.74px;">TBTCO</div><div class="c r" style="left:539px;width:93px;letter-spacing:0.30px;padding-right:7.70px;">141.727</div><div class="c r" style="left:632px;width:121px;letter-spacing:0.32px;padding-right:7.68px;background:#c6f5c0;">337.620.835</div><div class="c r" style="left:753px;width:101px;letter-spacing:0.32px;padding-right:7.68px;">2.382</div><div class="c r" style="left:854px;width:113px;letter-spacing:0.33px;padding-right:7.67px;">4.872.519</div><div class="c r" style="left:967px;width:85px;letter-spacing:0.24px;padding-right:7.76px;">34</div><div class="c r" style="left:1052px;width:75px;letter-spacing:0.24px;padding-right:7.76px;">0</div><div class="c r" style="left:1127px;width:93px;letter-spacing:0.24px;padding-right:7.76px;">150</div><div class="c r" style="left:1220px;width:101px;letter-spacing:0.32px;padding-right:7.68px;">2.382</div><div class="c r" style="left:1321px;width:101px;letter-spacing:0.30px;padding-right:7.70px;">141.727</div><div class="c r" style="left:1422px;width:85px;letter-spacing:0.24px;padding-right:7.76px;">1</div><div class="c r" style="left:1507px;width:85px;letter-spacing:0.24px;padding-right:7.76px;">1</div><div class="c r" style="left:1592px;width:85px;letter-spacing:0.24px;padding-right:7.76px;">1</div><div class="c r" style="left:1677px;width:85px;letter-spacing:0.24px;padding-right:7.76px;">1</div><div class="c" style="left:1762px;width:6px;border-right:none"></div></div>
<div class="row" style="top:818px;height:19px;overflow:hidden;background:#e2ecf6;border-bottom:1px solid #c3cdd8"><div class="c l" style="left:0px;width:358px;letter-spacing:-0.21px;">SELECT DISTINCT "MANDT" ,"ARFCIPID" ,"ARFCPID" ,"A</div><div class="c l" style="left:358px;width:181px;letter-spacing:-0.76px;">TRFCQOUT</div><div class="c r" style="left:539px;width:93px;letter-spacing:0.24px;padding-right:7.76px;">28</div><div class="c r" style="left:632px;width:121px;letter-spacing:0.32px;padding-right:7.68px;background:#c6f5c0;">324.930.739</div><div class="c r" style="left:753px;width:101px;letter-spacing:0.32px;padding-right:7.68px;">11.604.669</div><div class="c r" style="left:854px;width:113px;letter-spacing:0.30px;padding-right:7.70px;">260.695</div><div class="c r" style="left:967px;width:85px;letter-spacing:0.32px;padding-right:7.68px;">9.310</div><div class="c r" style="left:1052px;width:75px;letter-spacing:0.24px;padding-right:7.76px;">0</div><div class="c r" style="left:1127px;width:93px;letter-spacing:0.32px;padding-right:7.68px;">9.330</div><div class="c r" style="left:1220px;width:101px;letter-spacing:0.24px;padding-right:7.76px;">37</div><div class="c r" style="left:1321px;width:101px;letter-spacing:0.33px;padding-right:7.67px;">8.594.504</div><div class="c r" style="left:1422px;width:85px;letter-spacing:0.30px;padding-right:7.70px;">306.946</div><div class="c r" style="left:1507px;width:85px;letter-spacing:0.30px;padding-right:7.70px;">306.966</div><div class="c r" style="left:1592px;width:85px;letter-spacing:0.30px;padding-right:7.70px;">306.932</div><div class="c r" style="left:1677px;width:85px;letter-spacing:0.30px;padding-right:7.70px;">306.966</div><div class="c" style="left:1762px;width:6px;border-right:none"></div></div>
<div class="row" style="top:837px;height:19px;overflow:hidden;background:#d6e1ef;border-bottom:1px solid #c3cdd8"><div class="c l" style="left:0px;width:358px;letter-spacing:-0.24px;">SELECT "GUID" ,"EXTERNAL_ID" FROM "CGPL_ENTITY" WH</div><div class="c l" style="left:358px;width:181px;letter-spacing:-0.50px;">CGPL_ENTITY</div><div class="c r" style="left:539px;width:93px;letter-spacing:0.32px;padding-right:7.68px;">1.511</div><div class="c r" style="left:632px;width:121px;letter-spacing:0.32px;padding-right:7.68px;background:#c6f5c0;">312.766.615</div><div class="c r" style="left:753px;width:101px;letter-spacing:0.30px;padding-right:7.70px;">206.993</div><div class="c r" style="left:854px;width:113px;letter-spacing:0.30px;padding-right:7.70px;">113.327</div><div class="c r" style="left:967px;width:85px;letter-spacing:0.24px;padding-right:7.76px;">75</div><div class="c r" style="left:1052px;width:75px;letter-spacing:0.24px;padding-right:7.76px;">0</div><div class="c r" style="left:1127px;width:93px;letter-spacing:0.24px;padding-right:7.76px;">77</div><div class="c r" style="left:1220px;width:101px;letter-spacing:0.24px;padding-right:7.76px;">10</div><div class="c r" style="left:1321px;width:101px;letter-spacing:0.32px;padding-right:7.68px;">29.517.385</div><div class="c r" style="left:1422px;width:85px;letter-spacing:0.31px;padding-right:7.69px;">19.535</div><div class="c r" style="left:1507px;width:85px;letter-spacing:0.31px;padding-right:7.69px;">19.535</div><div class="c r" style="left:1592px;width:85px;letter-spacing:0.31px;padding-right:7.69px;">19.535</div><div class="c r" style="left:1677px;width:85px;letter-spacing:0.31px;padding-right:7.69px;">19.535</div><div class="c" style="left:1762px;width:6px;border-right:none"></div></div>
<div class="row" style="top:856px;height:19px;overflow:hidden;background:#e2ecf6;border-bottom:1px solid #c3cdd8"><div class="c l" style="left:0px;width:358px;letter-spacing:-0.25px;">INSERT INTO "/BNWVS/PCLOG_BUF" ( "MANDT" ,"LOGNUMB</div><div class="c l" style="left:358px;width:181px;letter-spacing:-0.46px;">/BNWVS/PCLOG_BUF</div><div class="c r" style="left:539px;width:93px;letter-spacing:0.33px;padding-right:7.67px;">1.362.108</div><div class="c r" style="left:632px;width:121px;letter-spacing:0.32px;padding-right:7.68px;background:#c6f5c0;">309.394.657</div><div class="c r" style="left:753px;width:101px;letter-spacing:0.24px;padding-right:7.76px;">227</div><div class="c r" style="left:854px;width:113px;letter-spacing:0.32px;padding-right:7.68px;">23.634.209</div><div class="c r" style="left:967px;width:85px;letter-spacing:0.24px;padding-right:7.76px;">17</div><div class="c r" style="left:1052px;width:75px;letter-spacing:0.24px;padding-right:7.76px;">0</div><div class="c r" style="left:1127px;width:93px;letter-spacing:0.24px;padding-right:7.76px;">152</div><div class="c r" style="left:1220px;width:101px;letter-spacing:0.24px;padding-right:7.76px;">227</div><div class="c r" style="left:1321px;width:101px;letter-spacing:0.33px;padding-right:7.67px;">1.362.108</div><div class="c r" style="left:1422px;width:85px;letter-spacing:0.24px;padding-right:7.76px;">1</div><div class="c r" style="left:1507px;width:85px;letter-spacing:0.24px;padding-right:7.76px;">1</div><div class="c r" style="left:1592px;width:85px;letter-spacing:0.24px;padding-right:7.76px;">1</div><div class="c r" style="left:1677px;width:85px;letter-spacing:0.24px;padding-right:7.76px;">1</div><div class="c" style="left:1762px;width:6px;border-right:none"></div></div>
<div class="row" style="top:875px;height:19px;overflow:hidden;background:#d6e1ef;border-bottom:1px solid #c3cdd8"><div class="c l" style="left:0px;width:358px;letter-spacing:-0.12px;">DELETE FROM "/BNWVS/MTR_05" WHERE "MANDT" = @P1 AN</div><div class="c l" style="left:358px;width:181px;letter-spacing:-0.25px;">/BNWVS/MTR_05</div><div class="c r" style="left:539px;width:93px;letter-spacing:0.24px;padding-right:7.76px;">804</div><div class="c r" style="left:632px;width:121px;letter-spacing:0.32px;padding-right:7.68px;background:#c6f5c0;">290.535.034</div><div class="c r" style="left:753px;width:101px;letter-spacing:0.30px;padding-right:7.70px;">361.361</div><div class="c r" style="left:854px;width:113px;letter-spacing:0.33px;padding-right:7.67px;">1.556.744</div><div class="c r" style="left:967px;width:85px;letter-spacing:0.32px;padding-right:7.68px;">1.936</div><div class="c r" style="left:1052px;width:75px;letter-spacing:0.24px;padding-right:7.76px;">68</div><div class="c r" style="left:1127px;width:93px;letter-spacing:0.32px;padding-right:7.68px;">4.107</div><div class="c r" style="left:1220px;width:101px;letter-spacing:0.32px;padding-right:7.68px;">3.613</div><div class="c r" style="left:1321px;width:101px;letter-spacing:0.31px;padding-right:7.69px;">80.400</div><div class="c r" style="left:1422px;width:85px;letter-spacing:0.24px;padding-right:7.76px;">100</div><div class="c r" style="left:1507px;width:85px;letter-spacing:0.24px;padding-right:7.76px;">100</div><div class="c r" style="left:1592px;width:85px;letter-spacing:0.24px;padding-right:7.76px;">100</div><div class="c r" style="left:1677px;width:85px;letter-spacing:0.24px;padding-right:7.76px;">100</div><div class="c" style="left:1762px;width:6px;border-right:none"></div></div>
<div class="row" style="top:894px;height:19px;overflow:hidden;background:#e2ecf6;border-bottom:1px solid #c3cdd8"><div class="c l" style="left:0px;width:358px;letter-spacing:-0.13px;">SELECT "MANDT" ,"GROUP_DEF" ,"SEQUENCE" ,"OS" ,"OS</div><div class="c l" style="left:358px;width:181px;letter-spacing:-0.44px;">/BNWVS/TASK_GRP</div><div class="c r" style="left:539px;width:93px;letter-spacing:0.31px;padding-right:7.69px;">54.098</div><div class="c r" style="left:632px;width:121px;letter-spacing:0.32px;padding-right:7.68px;background:#c6f5c0;">254.496.024</div><div class="c r" style="left:753px;width:101px;letter-spacing:0.32px;padding-right:7.68px;">4.704</div><div class="c r" style="left:854px;width:113px;letter-spacing:0.30px;padding-right:7.70px;">216.394</div><div class="c r" style="left:967px;width:85px;letter-spacing:0.24px;padding-right:7.76px;">4</div><div class="c r" style="left:1052px;width:75px;letter-spacing:0.24px;padding-right:7.76px;">0</div><div class="c r" style="left:1127px;width:93px;letter-spacing:0.24px;padding-right:7.76px;">6</div><div class="c r" style="left:1220px;width:101px;letter-spacing:0.24px;padding-right:7.76px;">20</div><div class="c r" style="left:1321px;width:101px;letter-spacing:0.32px;padding-right:7.68px;">12.334.344</div><div class="c r" style="left:1422px;width:85px;letter-spacing:0.24px;padding-right:7.76px;">228</div><div class="c r" style="left:1507px;width:85px;letter-spacing:0.24px;padding-right:7.76px;">228</div><div class="c r" style="left:1592px;width:85px;letter-spacing:0.24px;padding-right:7.76px;">228</div><div class="c r" style="left:1677px;width:85px;letter-spacing:0.24px;padding-right:7.76px;">228</div><div class="c" style="left:1762px;width:6px;border-right:none"></div></div>
<div class="row" style="top:913px;height:19px;overflow:hidden;background:#d6e1ef;border-bottom:1px solid #c3cdd8"><div class="c l" style="left:0px;width:358px;letter-spacing:-0.10px;">UPDATE "VARINUM" SET "VNUMBER" = "VNUMBER" + @P1 W</div><div class="c l" style="left:358px;width:181px;letter-spacing:-0.72px;">VARINUM</div><div class="c r" style="left:539px;width:93px;letter-spacing:0.31px;padding-right:7.69px;">43.928</div><div class="c r" style="left:632px;width:121px;letter-spacing:0.32px;padding-right:7.68px;background:#c6f5c0;">246.226.991</div><div class="c r" style="left:753px;width:101px;letter-spacing:0.32px;padding-right:7.68px;">5.605</div><div class="c r" style="left:854px;width:113px;letter-spacing:0.31px;padding-right:7.69px;">90.326</div><div class="c r" style="left:967px;width:85px;letter-spacing:0.24px;padding-right:7.76px;">2</div><div class="c r" style="left:1052px;width:75px;letter-spacing:0.24px;padding-right:7.76px;">0</div><div class="c r" style="left:1127px;width:93px;letter-spacing:0.24px;padding-right:7.76px;">4</div><div class="c r" style="left:1220px;width:101px;letter-spacing:0.32px;padding-right:7.68px;">5.605</div><div class="c r" style="left:1321px;width:101px;letter-spacing:0.31px;padding-right:7.69px;">43.928</div><div class="c r" style="left:1422px;width:85px;letter-spacing:0.24px;padding-right:7.76px;">1</div><div class="c r" style="left:1507px;width:85px;letter-spacing:0.24px;padding-right:7.76px;">1</div><div class="c r" style="left:1592px;width:85px;letter-spacing:0.24px;padding-right:7.76px;">1</div><div class="c r" style="left:1677px;width:85px;letter-spacing:0.24px;padding-right:7.76px;">1</div><div class="c" style="left:1762px;width:6px;border-right:none"></div></div>
<div class="row" style="top:932px;height:19px;overflow:hidden;background:#e2ecf6;border-bottom:1px solid #c3cdd8"><div class="c l" style="left:0px;width:358px;letter-spacing:-0.16px;">SELECT "MANDT" ,"GROUP_DEF" ,"WAIT_PERIOD" ,"ERR_R</div><div class="c l" style="left:358px;width:181px;letter-spacing:-0.42px;">/BNWVS/GRP_DEF</div><div class="c r" style="left:539px;width:93px;letter-spacing:0.31px;padding-right:7.69px;">54.098</div><div class="c r" style="left:632px;width:121px;letter-spacing:0.32px;padding-right:7.68px;background:#c6f5c0;">235.973.909</div><div class="c r" style="left:753px;width:101px;letter-spacing:0.32px;padding-right:7.68px;">4.361</div><div class="c r" style="left:854px;width:113px;letter-spacing:0.30px;padding-right:7.70px;">216.394</div><div class="c r" style="left:967px;width:85px;letter-spacing:0.24px;padding-right:7.76px;">4</div><div class="c r" style="left:1052px;width:75px;letter-spacing:0.24px;padding-right:7.76px;">0</div><div class="c r" style="left:1127px;width:93px;letter-spacing:0.24px;padding-right:7.76px;">6</div><div class="c r" style="left:1220px;width:101px;letter-spacing:0.24px;padding-right:7.76px;">19</div><div class="c r" style="left:1321px;width:101px;letter-spacing:0.32px;padding-right:7.68px;">12.334.344</div><div class="c r" style="left:1422px;width:85px;letter-spacing:0.24px;padding-right:7.76px;">228</div><div class="c r" style="left:1507px;width:85px;letter-spacing:0.24px;padding-right:7.76px;">228</div><div class="c r" style="left:1592px;width:85px;letter-spacing:0.24px;padding-right:7.76px;">228</div><div class="c r" style="left:1677px;width:85px;letter-spacing:0.24px;padding-right:7.76px;">228</div><div class="c" style="left:1762px;width:6px;border-right:none"></div></div>
<div class="row" style="top:951px;height:19px;overflow:hidden;background:#d6e1ef;border-bottom:1px solid #c3cdd8"><div class="c l" style="left:0px;width:358px;letter-spacing:-0.12px;">DELETE FROM "/BNWVS/MTR_06" WHERE "MANDT" = @P1 AN</div><div class="c l" style="left:358px;width:181px;letter-spacing:-0.25px;">/BNWVS/MTR_06</div><div class="c r" style="left:539px;width:93px;letter-spacing:0.24px;padding-right:7.76px;">218</div><div class="c r" style="left:632px;width:121px;letter-spacing:0.32px;padding-right:7.68px;background:#c6f5c0;">207.536.640</div><div class="c r" style="left:753px;width:101px;letter-spacing:0.30px;padding-right:7.70px;">952.002</div><div class="c r" style="left:854px;width:113px;letter-spacing:0.30px;padding-right:7.70px;">533.496</div><div class="c r" style="left:967px;width:85px;letter-spacing:0.32px;padding-right:7.68px;">2.447</div><div class="c r" style="left:1052px;width:75px;letter-spacing:0.24px;padding-right:7.76px;">231</div><div class="c r" style="left:1127px;width:93px;letter-spacing:0.32px;padding-right:7.68px;">4.770</div><div class="c r" style="left:1220px;width:101px;letter-spacing:0.32px;padding-right:7.68px;">9.520</div><div class="c r" style="left:1321px;width:101px;letter-spacing:0.31px;padding-right:7.69px;">21.800</div><div class="c r" style="left:1422px;width:85px;letter-spacing:0.24px;padding-right:7.76px;">100</div><div class="c r" style="left:1507px;width:85px;letter-spacing:0.24px;padding-right:7.76px;">100</div><div class="c r" style="left:1592px;width:85px;letter-spacing:0.24px;padding-right:7.76px;">100</div><div class="c r" style="left:1677px;width:85px;letter-spacing:0.24px;padding-right:7.76px;">100</div><div class="c" style="left:1762px;width:6px;border-right:none"></div></div>
<div class="row" style="top:970px;height:19px;overflow:hidden;background:#e2ecf6;border-bottom:1px solid #c3cdd8"><div class="c l" style="left:0px;width:358px;letter-spacing:-0.39px;">SELECT TABNAME, BLOCKNR, FIELDSLG, FIELDS FROM "DD</div><div class="c l" style="left:358px;width:181px;letter-spacing:-0.74px;">DDNTF</div><div class="c r" style="left:539px;width:93px;letter-spacing:0.31px;padding-right:7.69px;">16.914</div><div class="c r" style="left:632px;width:121px;letter-spacing:0.32px;padding-right:7.68px;background:#c6f5c0;">202.562.024</div><div class="c r" style="left:753px;width:101px;letter-spacing:0.31px;padding-right:7.69px;">11.975</div><div class="c r" style="left:854px;width:113px;letter-spacing:0.31px;padding-right:7.69px;">84.290</div><div class="c r" style="left:967px;width:85px;letter-spacing:0.24px;padding-right:7.76px;">4</div><div class="c r" style="left:1052px;width:75px;letter-spacing:0.24px;padding-right:7.76px;">2</div><div class="c r" style="left:1127px;width:93px;letter-spacing:0.24px;padding-right:7.76px;">104</div><div class="c r" style="left:1220px;width:101px;letter-spacing:0.31px;padding-right:7.69px;">11.763</div><div class="c r" style="left:1321px;width:101px;letter-spacing:0.31px;padding-right:7.69px;">17.219</div><div class="c r" style="left:1422px;width:85px;letter-spacing:0.24px;padding-right:7.76px;">1</div><div class="c r" style="left:1507px;width:85px;letter-spacing:0.24px;padding-right:7.76px;">8</div><div class="c r" style="left:1592px;width:85px;letter-spacing:0.24px;padding-right:7.76px;">1</div><div class="c r" style="left:1677px;width:85px;letter-spacing:0.24px;padding-right:7.76px;">1</div><div class="c" style="left:1762px;width:6px;border-right:none"></div></div>
<div class="row" style="top:989px;height:19px;overflow:hidden;background:#d6e1ef;border-bottom:1px solid #c3cdd8"><div class="c l" style="left:0px;width:358px;letter-spacing:-0.19px;">SELECT DISTINCT "MANDT" ,"QNAME" ,MIN( "QCOUNT" )</div><div class="c l" style="left:358px;width:181px;letter-spacing:-0.69px;">TRFCQIN</div><div class="c r" style="left:539px;width:93px;letter-spacing:0.31px;padding-right:7.69px;">14.502</div><div class="c r" style="left:632px;width:121px;letter-spacing:0.32px;padding-right:7.68px;background:#c6f5c0;">201.557.132</div><div class="c r" style="left:753px;width:101px;letter-spacing:0.31px;padding-right:7.69px;">13.898</div><div class="c r" style="left:854px;width:113px;letter-spacing:0.30px;padding-right:7.70px;">421.331</div><div class="c r" style="left:967px;width:85px;letter-spacing:0.24px;padding-right:7.76px;">29</div><div class="c r" style="left:1052px;width:75px;letter-spacing:0.24px;padding-right:7.76px;">0</div><div class="c r" style="left:1127px;width:93px;letter-spacing:0.24px;padding-right:7.76px;">707</div><div class="c r" style="left:1220px;width:101px;letter-spacing:0.24px;padding-right:7.76px;">20</div><div class="c r" style="left:1321px;width:101px;letter-spacing:0.33px;padding-right:7.67px;">9.817.046</div><div class="c r" style="left:1422px;width:85px;letter-spacing:0.24px;padding-right:7.76px;">676</div><div class="c r" style="left:1507px;width:85px;letter-spacing:0.31px;padding-right:7.69px;">18.389</div><div class="c r" style="left:1592px;width:85px;letter-spacing:0.24px;padding-right:7.76px;">0</div><div class="c r" style="left:1677px;width:85px;letter-spacing:0.31px;padding-right:7.69px;">18.389</div><div class="c" style="left:1762px;width:6px;border-right:none"></div></div>
<div class="row" style="top:1008px;height:19px;overflow:hidden;background:#e2ecf6;border-bottom:1px solid #c3cdd8"><div class="c l" style="left:0px;width:358px;letter-spacing:-0.15px;">INSERT INTO "/BNWVS/UPLHDR" ( "MANDT" ,"UPIDX" ,"M</div><div class="c l" style="left:358px;width:181px;letter-spacing:-0.55px;">/BNWVS/UPLHDR</div><div class="c r" style="left:539px;width:93px;letter-spacing:0.33px;padding-right:7.67px;">1.070.586</div><div class="c r" style="left:632px;width:121px;letter-spacing:0.32px;padding-right:7.68px;background:#c6f5c0;">195.560.201</div><div class="c r" style="left:753px;width:101px;letter-spacing:0.24px;padding-right:7.76px;">182</div><div class="c r" style="left:854px;width:113px;letter-spacing:0.32px;padding-right:7.68px;">18.550.945</div><div class="c r" style="left:967px;width:85px;letter-spacing:0.24px;padding-right:7.76px;">17</div><div class="c r" style="left:1052px;width:75px;letter-spacing:0.24px;padding-right:7.76px;">0</div><div class="c r" style="left:1127px;width:93px;letter-spacing:0.24px;padding-right:7.76px;">127</div><div class="c r" style="left:1220px;width:101px;letter-spacing:0.24px;padding-right:7.76px;">182</div><div class="c r" style="left:1321px;width:101px;letter-spacing:0.33px;padding-right:7.67px;">1.070.586</div><div class="c r" style="left:1422px;width:85px;letter-spacing:0.24px;padding-right:7.76px;">1</div><div class="c r" style="left:1507px;width:85px;letter-spacing:0.24px;padding-right:7.76px;">1</div><div class="c r" style="left:1592px;width:85px;letter-spacing:0.24px;padding-right:7.76px;">1</div><div class="c r" style="left:1677px;width:85px;letter-spacing:0.24px;padding-right:7.76px;">1</div><div class="c" style="left:1762px;width:6px;border-right:none"></div></div>
<div class="row" style="top:1027px;height:19px;overflow:hidden;background:#d6e1ef;border-bottom:1px solid #c3cdd8"><div class="c l" style="left:0px;width:358px;letter-spacing:-0.15px;">SELECT "ROLE_A" ,"ROLE_B" ,"RELATIONID" ,"BRELTYP"</div><div class="c l" style="left:358px;width:181px;letter-spacing:-0.70px;">SRGBINREL</div><div class="c r" style="left:539px;width:93px;letter-spacing:0.32px;padding-right:7.68px;">6.960</div><div class="c r" style="left:632px;width:121px;letter-spacing:0.32px;padding-right:7.68px;background:#c6f5c0;">192.502.438</div><div class="c r" style="left:753px;width:101px;letter-spacing:0.31px;padding-right:7.69px;">27.658</div><div class="c r" style="left:854px;width:113px;letter-spacing:0.32px;padding-right:7.68px;">37.324.394</div><div class="c r" style="left:967px;width:85px;letter-spacing:0.32px;padding-right:7.68px;">5.362</div><div class="c r" style="left:1052px;width:75px;letter-spacing:0.24px;padding-right:7.76px;">0</div><div class="c r" style="left:1127px;width:93px;letter-spacing:0.31px;padding-right:7.69px;">64.268</div><div class="c r" style="left:1220px;width:101px;letter-spacing:0.31px;padding-right:7.69px;">27.658</div><div class="c r" style="left:1321px;width:101px;letter-spacing:0.24px;padding-right:7.76px;">0</div><div class="c r" style="left:1422px;width:85px;letter-spacing:0.24px;padding-right:7.76px;">0</div><div class="c r" style="left:1507px;width:85px;letter-spacing:0.24px;padding-right:7.76px;">0</div><div class="c r" style="left:1592px;width:85px;letter-spacing:0.24px;padding-right:7.76px;">0</div><div class="c r" style="left:1677px;width:85px;letter-spacing:0.24px;padding-right:7.76px;">0</div><div class="c" style="left:1762px;width:6px;border-right:none"></div></div>
<div class="row" style="top:1046px;height:19px;overflow:hidden;background:#e2ecf6;border-bottom:1px solid #c3cdd8"><div class="c l" style="left:0px;width:358px;letter-spacing:-0.15px;">SELECT "VALUE1" ,"VALUE2" ,"DATE_VALUE" ,"TIME_VAL</div><div class="c l" style="left:358px;width:181px;letter-spacing:-0.52px;">/BNWVS/TEMP</div><div class="c r" style="left:539px;width:93px;letter-spacing:0.24px;padding-right:7.76px;">348</div><div class="c r" style="left:632px;width:121px;letter-spacing:0.32px;padding-right:7.68px;background:#c6f5c0;">190.622.475</div><div class="c r" style="left:753px;width:101px;letter-spacing:0.30px;padding-right:7.70px;">547.765</div><div class="c r" style="left:854px;width:113px;letter-spacing:0.31px;padding-right:7.69px;">59.167</div><div class="c r" style="left:967px;width:85px;letter-spacing:0.24px;padding-right:7.76px;">170</div><div class="c r" style="left:1052px;width:75px;letter-spacing:0.24px;padding-right:7.76px;">0</div><div class="c r" style="left:1127px;width:93px;letter-spacing:0.24px;padding-right:7.76px;">173</div><div class="c r" style="left:1220px;width:101px;letter-spacing:0.24px;padding-right:7.76px;">104</div><div class="c r" style="left:1321px;width:101px;letter-spacing:0.33px;padding-right:7.67px;">1.823.286</div><div class="c r" style="left:1422px;width:85px;letter-spacing:0.32px;padding-right:7.68px;">5.239</div><div class="c r" style="left:1507px;width:85px;letter-spacing:0.32px;padding-right:7.68px;">5.311</div><div class="c r" style="left:1592px;width:85px;letter-spacing:0.32px;padding-right:7.68px;">5.232</div><div class="c r" style="left:1677px;width:85px;letter-spacing:0.32px;padding-right:7.68px;">5.239</div><div class="c" style="left:1762px;width:6px;border-right:none"></div></div>
<div class="row" style="top:1065px;height:19px;overflow:hidden;background:#d6e1ef;border-bottom:1px solid #c3cdd8"><div class="c l" style="left:0px;width:358px;letter-spacing:0.03px;">SELECT TOP  50  obj.name as TABNAME,   SUM( spart.</div><div class="c l" style="left:358px;width:181px;letter-spacing:0.02px;">partitions</div><div class="c r" style="left:539px;width:93px;letter-spacing:0.24px;padding-right:7.76px;">30</div><div class="c r" style="left:632px;width:121px;letter-spacing:0.32px;padding-right:7.68px;background:#c6f5c0;">176.561.547</div><div class="c r" style="left:753px;width:101px;letter-spacing:0.33px;padding-right:7.67px;">5.885.384</div><div class="c r" style="left:854px;width:113px;letter-spacing:0.32px;padding-right:7.68px;">43.441.439</div><div class="c r" style="left:967px;width:85px;letter-spacing:0.33px;padding-right:7.67px;">1.448.047</div><div class="c r" style="left:1052px;width:75px;letter-spacing:0.24px;padding-right:7.76px;">112</div><div class="c r" style="left:1127px;width:93px;letter-spacing:0.33px;padding-right:7.67px;">1.887.001</div><div class="c r" style="left:1220px;width:101px;letter-spacing:0.30px;padding-right:7.70px;">117.707</div><div class="c r" style="left:1321px;width:101px;letter-spacing:0.32px;padding-right:7.68px;">1.500</div><div class="c r" style="left:1422px;width:85px;letter-spacing:0.24px;padding-right:7.76px;">50</div><div class="c r" style="left:1507px;width:85px;letter-spacing:0.24px;padding-right:7.76px;">50</div><div class="c r" style="left:1592px;width:85px;letter-spacing:0.24px;padding-right:7.76px;">50</div><div class="c r" style="left:1677px;width:85px;letter-spacing:0.24px;padding-right:7.76px;">50</div><div class="c" style="left:1762px;width:6px;border-right:none"></div></div>
<div class="row" style="top:1084px;height:19px;overflow:hidden;background:#e2ecf6;border-bottom:1px solid #c3cdd8"><div class="c l" style="left:0px;width:358px;letter-spacing:-0.30px;">SELECT "QDATA" FROM "REPOLOAD" WHERE "PROGNAME" =</div><div class="c l" style="left:358px;width:181px;letter-spacing:-0.76px;">REPOLOAD</div><div class="c r" style="left:539px;width:93px;letter-spacing:0.32px;padding-right:7.68px;">6.690</div><div class="c r" style="left:632px;width:121px;letter-spacing:0.32px;padding-right:7.68px;background:#c6f5c0;">173.443.009</div><div class="c r" style="left:753px;width:101px;letter-spacing:0.31px;padding-right:7.69px;">25.925</div><div class="c r" style="left:854px;width:113px;letter-spacing:0.30px;padding-right:7.70px;">157.447</div><div class="c r" style="left:967px;width:85px;letter-spacing:0.24px;padding-right:7.76px;">23</div><div class="c r" style="left:1052px;width:75px;letter-spacing:0.24px;padding-right:7.76px;">4</div><div class="c r" style="left:1127px;width:93px;letter-spacing:0.32px;padding-right:7.68px;">1.468</div><div class="c r" style="left:1220px;width:101px;letter-spacing:0.31px;padding-right:7.69px;">25.925</div><div class="c r" style="left:1321px;width:101px;letter-spacing:0.32px;padding-right:7.68px;">6.690</div><div class="c r" style="left:1422px;width:85px;letter-spacing:0.24px;padding-right:7.76px;">1</div><div class="c r" style="left:1507px;width:85px;letter-spacing:0.24px;padding-right:7.76px;">1</div><div class="c r" style="left:1592px;width:85px;letter-spacing:0.24px;padding-right:7.76px;">1</div><div class="c r" style="left:1677px;width:85px;letter-spacing:0.24px;padding-right:7.76px;">1</div><div class="c" style="left:1762px;width:6px;border-right:none"></div></div>
<div class="row" style="top:1103px;height:19px;overflow:hidden;background:#d6e1ef;border-bottom:1px solid #c3cdd8"><div class="c l" style="left:0px;width:358px;letter-spacing:-0.12px;">SELECT "RELID" ,"MONISET" ,"SRTF2" ,"VERSION" ,"MA</div><div class="c l" style="left:358px;width:181px;letter-spacing:-0.70px;">ALMONISETS</div><div class="c r" style="left:539px;width:93px;letter-spacing:0.24px;padding-right:7.76px;">348</div><div class="c r" style="left:632px;width:121px;letter-spacing:0.32px;padding-right:7.68px;background:#c6f5c0;">160.379.848</div><div class="c r" style="left:753px;width:101px;letter-spacing:0.30px;padding-right:7.70px;">460.861</div><div class="c r" style="left:854px;width:113px;letter-spacing:0.31px;padding-right:7.69px;">64.382</div><div class="c r" style="left:967px;width:85px;letter-spacing:0.24px;padding-right:7.76px;">185</div><div class="c r" style="left:1052px;width:75px;letter-spacing:0.24px;padding-right:7.76px;">0</div><div class="c r" style="left:1127px;width:93px;letter-spacing:0.24px;padding-right:7.76px;">187</div><div class="c r" style="left:1220px;width:101px;letter-spacing:0.32px;padding-right:7.68px;">1.298</div><div class="c r" style="left:1321px;width:101px;letter-spacing:0.30px;padding-right:7.70px;">123.540</div><div class="c r" style="left:1422px;width:85px;letter-spacing:0.24px;padding-right:7.76px;">355</div><div class="c r" style="left:1507px;width:85px;letter-spacing:0.24px;padding-right:7.76px;">355</div><div class="c r" style="left:1592px;width:85px;letter-spacing:0.24px;padding-right:7.76px;">355</div><div class="c r" style="left:1677px;width:85px;letter-spacing:0.24px;padding-right:7.76px;">355</div><div class="c" style="left:1762px;width:6px;border-right:none"></div></div>
<div class="row" style="top:1122px;height:19px;overflow:hidden;background:#e2ecf6;border-bottom:1px solid #c3cdd8"><div class="c l" style="left:0px;width:358px;letter-spacing:-0.19px;">SELECT "PATCH" ,"SHORT_TEXT" ,"STATUS" ,"DELIV_DAT</div><div class="c l" style="left:358px;width:181px;letter-spacing:-0.33px;">PAT03</div><div class="c r" style="left:539px;width:93px;letter-spacing:0.30px;padding-right:7.70px;">978.620</div><div class="c r" style="left:632px;width:121px;letter-spacing:0.32px;padding-right:7.68px;background:#c6f5c0;">128.911.773</div><div class="c r" style="left:753px;width:101px;letter-spacing:0.24px;padding-right:7.76px;">131</div><div class="c r" style="left:854px;width:113px;letter-spacing:0.32px;padding-right:7.68px;">12.615.182</div><div class="c r" style="left:967px;width:85px;letter-spacing:0.24px;padding-right:7.76px;">12</div><div class="c r" style="left:1052px;width:75px;letter-spacing:0.24px;padding-right:7.76px;">0</div><div class="c r" style="left:1127px;width:93px;letter-spacing:0.24px;padding-right:7.76px;">104</div><div class="c r" style="left:1220px;width:101px;letter-spacing:0.24px;padding-right:7.76px;">29</div><div class="c r" style="left:1321px;width:101px;letter-spacing:0.33px;padding-right:7.67px;">4.328.640</div><div class="c r" style="left:1422px;width:85px;letter-spacing:0.24px;padding-right:7.76px;">4</div><div class="c r" style="left:1507px;width:85px;letter-spacing:0.24px;padding-right:7.76px;">50</div><div class="c r" style="left:1592px;width:85px;letter-spacing:0.24px;padding-right:7.76px;">0</div><div class="c r" style="left:1677px;width:85px;letter-spacing:0.24px;padding-right:7.76px;">4</div><div class="c" style="left:1762px;width:6px;border-right:none"></div></div>
<div class="row" style="top:1141px;height:19px;overflow:hidden;background:#d6e1ef;border-bottom:1px solid #c3cdd8"><div class="c l" style="left:0px;width:358px;letter-spacing:-0.21px;">SELECT "TADIR" ."DEVCLASS" FROM "TADIR" ,( VALUES</div><div class="c l" style="left:358px;width:181px;letter-spacing:-0.66px;">TADIR</div><div class="c r" style="left:539px;width:93px;letter-spacing:0.31px;padding-right:7.69px;">39.292</div><div class="c r" style="left:632px;width:121px;letter-spacing:0.32px;padding-right:7.68px;background:#c6f5c0;">126.603.002</div><div class="c r" style="left:753px;width:101px;letter-spacing:0.32px;padding-right:7.68px;">3.222</div><div class="c r" style="left:854px;width:113px;letter-spacing:0.33px;padding-right:7.67px;">9.172.628</div><div class="c r" style="left:967px;width:85px;letter-spacing:0.24px;padding-right:7.76px;">233</div><div class="c r" style="left:1052px;width:75px;letter-spacing:0.24px;padding-right:7.76px;">0</div><div class="c r" style="left:1127px;width:93px;letter-spacing:0.24px;padding-right:7.76px;">804</div><div class="c r" style="left:1220px;width:101px;letter-spacing:0.24px;padding-right:7.76px;">25</div><div class="c r" style="left:1321px;width:101px;letter-spacing:0.33px;padding-right:7.67px;">4.968.598</div><div class="c r" style="left:1422px;width:85px;letter-spacing:0.24px;padding-right:7.76px;">126</div><div class="c r" style="left:1507px;width:85px;letter-spacing:0.31px;padding-right:7.69px;">17.085</div><div class="c r" style="left:1592px;width:85px;letter-spacing:0.24px;padding-right:7.76px;">0</div><div class="c r" style="left:1677px;width:85px;letter-spacing:0.24px;padding-right:7.76px;">2</div><div class="c" style="left:1762px;width:6px;border-right:none"></div></div>
<div class="row" style="top:1160px;height:19px;overflow:hidden;background:#e2ecf6;border-bottom:1px solid #c3cdd8"><div class="c l" style="left:0px;width:358px;letter-spacing:-0.20px;">UPDATE "ARFCSSTATE" SET "ARFCSTATE" = @P1 ,"ARFCFN</div><div class="c l" style="left:358px;width:181px;letter-spacing:-0.72px;">ARFCSSTATE</div><div class="c r" style="left:539px;width:93px;letter-spacing:0.30px;padding-right:7.70px;">100.487</div><div class="c r" style="left:632px;width:121px;letter-spacing:0.32px;padding-right:7.68px;background:#c6f5c0;">120.727.477</div><div class="c r" style="left:753px;width:101px;letter-spacing:0.32px;padding-right:7.68px;">1.201</div><div class="c r" style="left:854px;width:113px;letter-spacing:0.33px;padding-right:7.67px;">2.355.172</div><div class="c r" style="left:967px;width:85px;letter-spacing:0.24px;padding-right:7.76px;">23</div><div class="c r" style="left:1052px;width:75px;letter-spacing:0.24px;padding-right:7.76px;">0</div><div class="c r" style="left:1127px;width:93px;letter-spacing:0.24px;padding-right:7.76px;">55</div><div class="c r" style="left:1220px;width:101px;letter-spacing:0.32px;padding-right:7.68px;">1.201</div><div class="c r" style="left:1321px;width:101px;letter-spacing:0.30px;padding-right:7.70px;">100.487</div><div class="c r" style="left:1422px;width:85px;letter-spacing:0.24px;padding-right:7.76px;">1</div><div class="c r" style="left:1507px;width:85px;letter-spacing:0.24px;padding-right:7.76px;">1</div><div class="c r" style="left:1592px;width:85px;letter-spacing:0.24px;padding-right:7.76px;">1</div><div class="c r" style="left:1677px;width:85px;letter-spacing:0.24px;padding-right:7.76px;">1</div><div class="c" style="left:1762px;width:6px;border-right:none"></div></div>
<div class="row" style="top:1179px;height:19px;overflow:hidden;background:#d6e1ef;border-bottom:1px solid #c3cdd8"><div class="c l" style="left:0px;width:358px;letter-spacing:-0.09px;">UPDATE "TBTCO" SET "JOBGROUP" = @P1 ,"INTREPORT" =</div><div class="c l" style="left:358px;width:181px;letter-spacing:-0.74px;">TBTCO</div><div class="c r" style="left:539px;width:93px;letter-spacing:0.31px;padding-right:7.69px;">58.915</div><div class="c r" style="left:632px;width:121px;letter-spacing:0.32px;padding-right:7.68px;background:#c6f5c0;">119.698.092</div><div class="c r" style="left:753px;width:101px;letter-spacing:0.32px;padding-right:7.68px;">2.031</div><div class="c r" style="left:854px;width:113px;letter-spacing:0.33px;padding-right:7.67px;">2.032.669</div><div class="c r" style="left:967px;width:85px;letter-spacing:0.24px;padding-right:7.76px;">34</div><div class="c r" style="left:1052px;width:75px;letter-spacing:0.24px;padding-right:7.76px;">0</div><div class="c r" style="left:1127px;width:93px;letter-spacing:0.24px;padding-right:7.76px;">63</div><div class="c r" style="left:1220px;width:101px;letter-spacing:0.32px;padding-right:7.68px;">2.031</div><div class="c r" style="left:1321px;width:101px;letter-spacing:0.31px;padding-right:7.69px;">58.915</div><div class="c r" style="left:1422px;width:85px;letter-spacing:0.24px;padding-right:7.76px;">1</div><div class="c r" style="left:1507px;width:85px;letter-spacing:0.24px;padding-right:7.76px;">1</div><div class="c r" style="left:1592px;width:85px;letter-spacing:0.24px;padding-right:7.76px;">1</div><div class="c r" style="left:1677px;width:85px;letter-spacing:0.24px;padding-right:7.76px;">1</div><div class="c" style="left:1762px;width:6px;border-right:none"></div></div>
<div class="row" style="top:1198px;height:8px;overflow:hidden;background:#e2ecf6;border-bottom:1px solid #c3cdd8"><div class="c l" style="left:0px;width:358px;letter-spacing:-0.28px;">SELECT "CP_ID" FROM "COM_SF_CPOINTER" WHERE "MANDT</div><div class="c l" style="left:358px;width:181px;letter-spacing:-0.46px;">COM_SF_CPOINTER</div><div class="c r" style="left:539px;width:93px;letter-spacing:0.24px;padding-right:7.76px;">488</div><div class="c r" style="left:632px;width:121px;letter-spacing:0.32px;padding-right:7.68px;background:#c6f5c0;">115.095.118</div><div class="c r" style="left:753px;width:101px;letter-spacing:0.30px;padding-right:7.70px;">227.674</div><div class="c r" style="left:854px;width:113px;letter-spacing:0.33px;padding-right:7.67px;">1.144.848</div><div class="c r" style="left:967px;width:85px;letter-spacing:0.32px;padding-right:7.68px;">2.346</div><div class="c r" style="left:1052px;width:75px;letter-spacing:0.24px;padding-right:7.76px;">0</div><div class="c r" style="left:1127px;width:93px;letter-spacing:0.32px;padding-right:7.68px;">2.346</div><div class="c r" style="left:1220px;width:101px;letter-spacing:0.30px;padding-right:7.70px;">227.674</div><div class="c r" style="left:1321px;width:101px;letter-spacing:0.24px;padding-right:7.76px;">488</div><div class="c r" style="left:1422px;width:85px;letter-spacing:0.24px;padding-right:7.76px;">1</div><div class="c r" style="left:1507px;width:85px;letter-spacing:0.24px;padding-right:7.76px;">1</div><div class="c r" style="left:1592px;width:85px;letter-spacing:0.24px;padding-right:7.76px;">1</div><div class="c r" style="left:1677px;width:85px;letter-spacing:0.24px;padding-right:7.76px;">1</div><div class="c" style="left:1762px;width:6px;border-right:none"></div></div>
<div class="a" style="left:2485px;top:305px;width:17px;height:901px;background:#f8f9fb"></div>
<div class="a" style="left:2485px;top:305px;width:17px;height:17px;background:linear-gradient(90deg,#f3f5f7,#eceff3);border:none"></div>
<svg class="a" style="left:0;top:0;overflow:visible" width="1" height="1"><path d="M2489 315h8l-4-4.5z" fill="#556677"/></svg>
<div class="a" style="left:2485px;top:323px;width:17px;height:17px;background:linear-gradient(90deg,#f3f5f7,#eceff3);border:none"></div>
<svg class="a" style="left:0;top:0;overflow:visible" width="1" height="1"><path d="M2489 329h8l-4 4.5z" fill="#556677"/></svg>
<div class="a" style="left:2487px;top:342px;width:14px;height:124px;background:linear-gradient(90deg,#e9eef4,#f4f7fa,#e3e9f0);border:1px solid #b6c2cf;border-radius:2px"></div>
<svg class="a" style="left:2491px;top:401px" width="7" height="10"><g fill="#a3b0bf"><rect x="0" y="0" width="2" height="2"/><rect x="4" y="0" width="2" height="2"/><rect x="0" y="4" width="2" height="2"/><rect x="4" y="4" width="2" height="2"/><rect x="0" y="8" width="2" height="2"/><rect x="4" y="8" width="2" height="2"/></g></svg>
<div class="a" style="left:2485px;top:1170px;width:17px;height:17px;background:linear-gradient(90deg,#f3f5f7,#eceff3);border:none"></div>
<svg class="a" style="left:0;top:0;overflow:visible" width="1" height="1"><path d="M2489 1180h8l-4-4.5z" fill="#556677"/></svg>
<div class="a" style="left:2485px;top:1188px;width:17px;height:17px;background:linear-gradient(90deg,#f3f5f7,#eceff3);border:none"></div>
<svg class="a" style="left:0;top:0;overflow:visible" width="1" height="1"><path d="M2489 1194h8l-4 4.5z" fill="#556677"/></svg>
<div class="a" style="left:715px;top:1206px;width:1767px;height:21px;background:#d0dce8"></div>
<div class="a" style="left:751px;top:1208px;width:1695px;height:17px;background:#f8f9fb"></div>
<div class="a" style="left:715px;top:1208px;width:17px;height:17px;background:linear-gradient(90deg,#f3f5f7,#eceff3);border:none"></div>
<svg class="a" style="left:0;top:0;overflow:visible" width="1" height="1"><path d="M725 1212v8l-4.5-4z" fill="#556677"/></svg>
<div class="a" style="left:733px;top:1208px;width:17px;height:17px;background:linear-gradient(90deg,#f3f5f7,#eceff3);border:none"></div>
<svg class="a" style="left:0;top:0;overflow:visible" width="1" height="1"><path d="M739 1212v8l4.5-4z" fill="#556677"/></svg>
<div class="a" style="left:753px;top:1209px;width:883px;height:15px;background:linear-gradient(#eef2f6,#e2e8ef);border:1px solid #b6c2cf;border-radius:2px"></div>
<svg class="a" style="left:1189px;top:1213px" width="10" height="7"><g fill="#a3b0bf"><rect x="0" y="0" width="2" height="2"/><rect x="4" y="0" width="2" height="2"/><rect x="8" y="0" width="2" height="2"/><rect x="0" y="4" width="2" height="2"/><rect x="4" y="4" width="2" height="2"/><rect x="8" y="4" width="2" height="2"/></g></svg>
<div class="a" style="left:2446px;top:1208px;width:17px;height:17px;background:linear-gradient(90deg,#f3f5f7,#eceff3);border:none"></div>
<svg class="a" style="left:0;top:0;overflow:visible" width="1" height="1"><path d="M2456 1212v8l-4.5-4z" fill="#556677"/></svg>
<div class="a" style="left:2464px;top:1208px;width:17px;height:17px;background:linear-gradient(90deg,#f3f5f7,#eceff3);border:none"></div>
<svg class="a" style="left:0;top:0;overflow:visible" width="1" height="1"><path d="M2470 1212v8l4.5-4z" fill="#556677"/></svg>
<svg class="a" style="left:0;top:0" width="700" height="400" viewBox="0 0 700 400">
<defs><filter id="sh" x="-20%" y="-50%" width="140%" height="200%"><feGaussianBlur in="SourceAlpha" stdDeviation="2"/><feOffset dx="2" dy="4"/><feComponentTransfer><feFuncA type="linear" slope="0.55"/></feComponentTransfer><feMerge><feMergeNode/><feMergeNode in="SourceGraphic"/></feMerge></filter></defs>
<g filter="url(#sh)" fill="#d20f31">
<path d="M351 215.5 Q356 215 356.5 220 Q356.5 224.5 351.5 225 L181 250.5 L183 260 L151 250 L179 231 L180.5 240 Z"/>
<path d="M355.5 295 Q360.5 295 360.5 300 Q360.5 304.5 355.5 305 L191 315 L192 323.7 L161 310.6 L189.5 294.5 L190 303.5 Z"/>
</g>
<g filter="url(#sh)" fill="none" stroke-linecap="round" stroke-linejoin="round">
<path d="M392 201.5 L399 194.5 L399 214 M404 299 Q405 292.5 410.5 292.5 Q416.5 292.5 416.5 298.5 Q416.5 302 412.5 305.5 L404.5 311.5 L416 311.5" stroke="#fff" stroke-width="9.5"/>
<path d="M392 201.5 L399 194.5 L399 214 M404 299 Q405 292.5 410.5 292.5 Q416.5 292.5 416.5 298.5 Q416.5 302 412.5 305.5 L404.5 311.5 L416 311.5" stroke="#d20f31" stroke-width="3.6"/>
</g>
</svg>
</body></html>
